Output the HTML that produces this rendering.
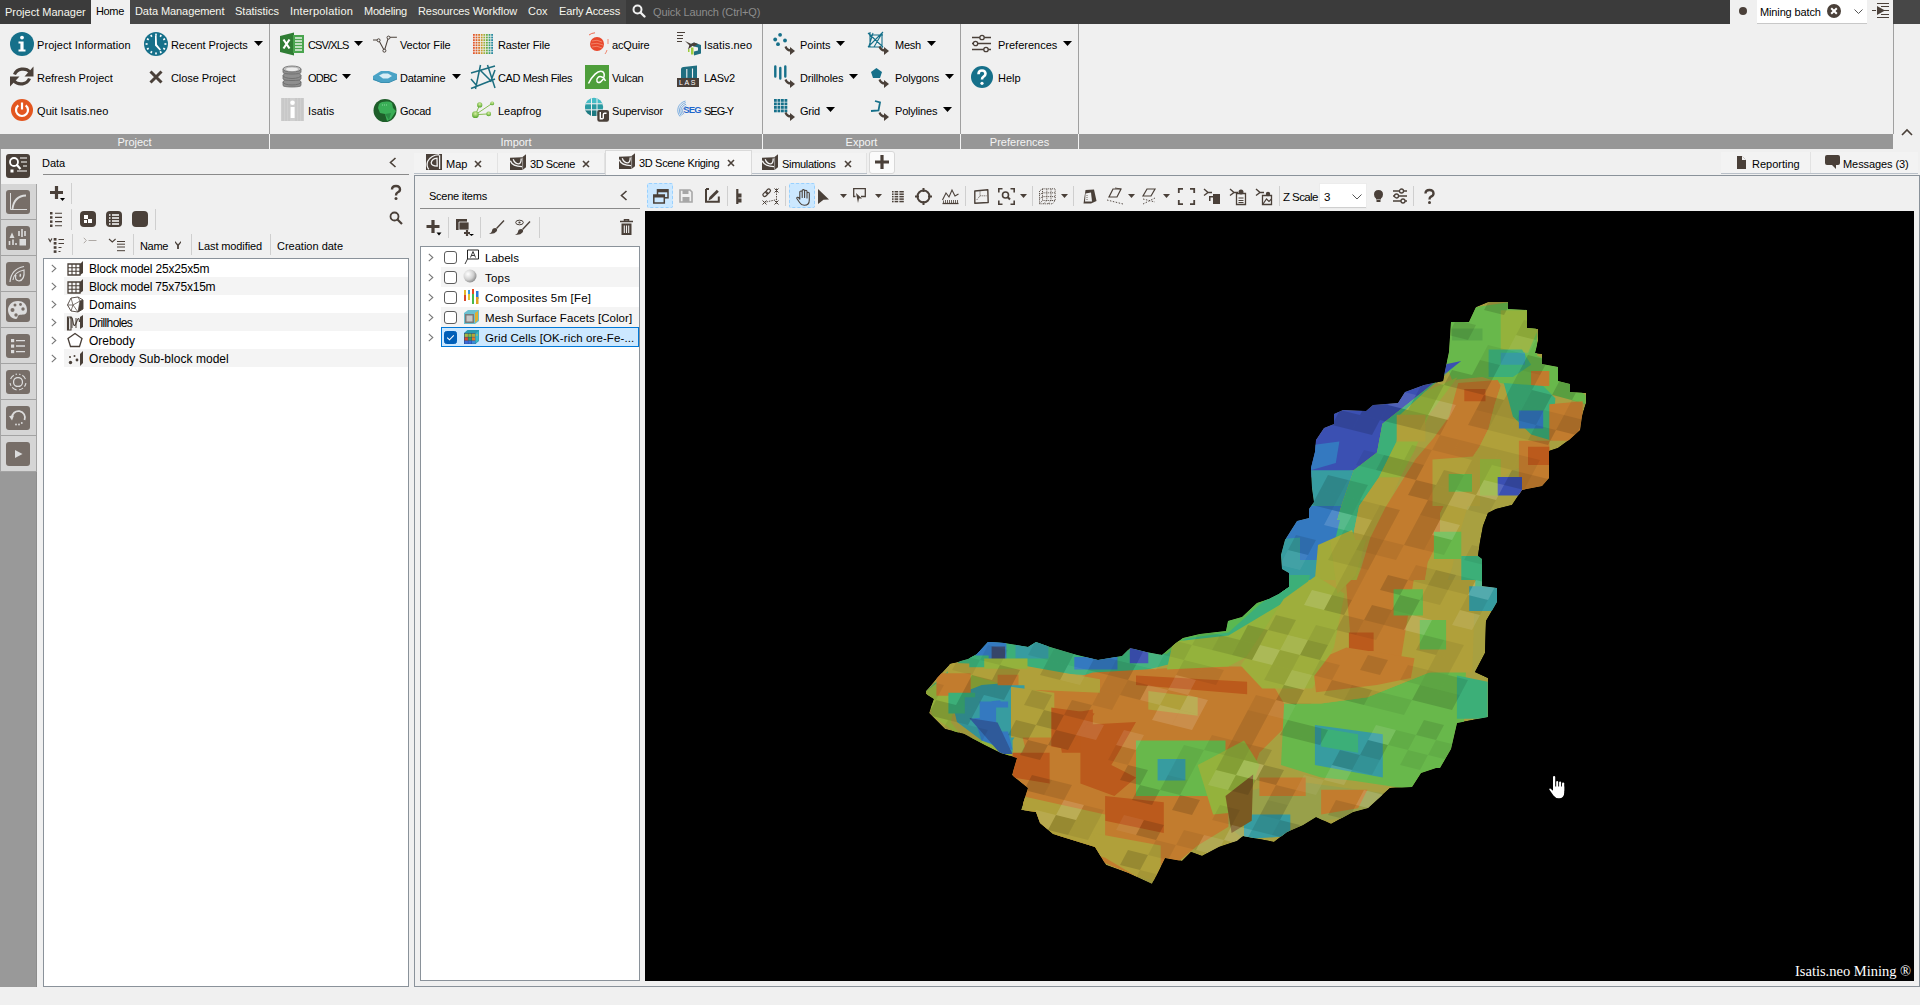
<!DOCTYPE html>
<html><head><meta charset="utf-8">
<style>
*{box-sizing:border-box;margin:0;padding:0}
html,body{width:1920px;height:1005px;overflow:hidden;background:#f0f0f0;font-family:"Liberation Sans",sans-serif;font-size:11px;color:#1b1b1b}
.a{position:absolute}
.t{position:absolute;white-space:nowrap;line-height:14px;font-size:11px}
svg{position:absolute;overflow:visible}
</style></head><body>
<div class="a" style="left:0px;top:0px;width:1920px;height:24px;background:#474747;"></div>
<div class="a" style="left:0px;top:0px;width:91px;height:24px;background:#3b3b3b;"></div>
<div class="a" style="left:91px;top:0px;width:39px;height:24px;background:#f0f0f0;"></div>
<div class="a" style="left:626px;top:0px;width:1104px;height:24px;background:#3b3b3b;"></div>
<div class="t" style="left:5px;top:5.0px;color:#f6f6ee;">Project Manager</div>
<div class="t" style="left:96px;top:4.0px;letter-spacing:-0.360px;color:#000;">Home</div>
<div class="t" style="left:135px;top:4.0px;letter-spacing:-0.073px;color:#f6f6ee;">Data Management</div>
<div class="t" style="left:235px;top:4.0px;color:#f6f6ee;">Statistics</div>
<div class="t" style="left:290px;top:4.0px;letter-spacing:0.189px;color:#f6f6ee;">Interpolation</div>
<div class="t" style="left:364px;top:4.0px;letter-spacing:-0.204px;color:#f6f6ee;">Modeling</div>
<div class="t" style="left:418px;top:4.0px;letter-spacing:-0.092px;color:#f6f6ee;">Resources Workflow</div>
<div class="t" style="left:528px;top:4.0px;color:#f6f6ee;">Cox</div>
<div class="t" style="left:559px;top:4.0px;letter-spacing:-0.164px;color:#f6f6ee;">Early Access</div>
<svg style="left:632px;top:4px" width="14" height="14" viewBox="0 0 14 14"><circle cx="5.5" cy="5.5" r="4" fill="none" stroke="#f0f0f0" stroke-width="2"/><path d="M8.5 8.5L12.5 12.5" stroke="#f0f0f0" stroke-width="2.4" stroke-linecap="round"/></svg>
<div class="t" style="left:653px;top:5.0px;letter-spacing:-0.118px;color:#8c8c8c;">Quick Launch (Ctrl+Q)</div>
<div class="a" style="left:1730px;top:0px;width:163px;height:24px;background:#f0f0f0;"></div>
<svg style="left:1739px;top:7px" width="8" height="8" viewBox="0 0 8 8"><circle cx="4" cy="4" r="4" fill="#4a4039"/></svg>
<div class="a" style="left:1757px;top:0px;width:110px;height:23px;background:#fff;box-shadow:0 1px 0 #c8c8c8"></div>
<div class="t" style="left:1760px;top:5.0px;letter-spacing:-0.135px;color:#000;">Mining batch</div>
<svg style="left:1827px;top:4px" width="14" height="14" viewBox="0 0 14 14"><circle cx="7" cy="7" r="7" fill="#4a4039"/><path d="M4.2 4.2L9.8 9.8M9.8 4.2L4.2 9.8" stroke="#fff" stroke-width="2"/></svg>
<svg style="left:1854px;top:9px" width="9" height="5" viewBox="0 0 9 5"><path d="M0.5 0.5L4.5 4.5L8.5 0.5" fill="none" stroke="#555" stroke-width="1"/></svg>
<svg style="left:1872px;top:2px" width="18" height="16" viewBox="0 0 18 16"><path d="M5 1.5H17M9 4.5H17M0 8.5H4M12 8.5H17M9 12.5H17M5 15.5H17" stroke="#4a4039" stroke-width="1"/><path d="M5 4L13 8.5L5 13Z" fill="#4a4039"/></svg>
<div class="a" style="left:0px;top:24px;width:1893px;height:110px;background:#f0f0f0;"></div>
<div class="a" style="left:1893px;top:24px;width:1px;height:110px;background:#a0a0a0;"></div>
<div class="a" style="left:269px;top:24px;width:1px;height:110px;background:#a0a0a0;"></div>
<div class="a" style="left:762px;top:24px;width:1px;height:110px;background:#a0a0a0;"></div>
<div class="a" style="left:960px;top:24px;width:1px;height:110px;background:#a0a0a0;"></div>
<div class="a" style="left:1078px;top:24px;width:1px;height:110px;background:#a0a0a0;"></div>
<div class="a" style="left:0px;top:134px;width:1893px;height:15px;background:#979797;"></div>
<div class="a" style="left:269px;top:134px;width:1px;height:15px;background:#f4f4f4;"></div>
<div class="a" style="left:762px;top:134px;width:1px;height:15px;background:#f4f4f4;"></div>
<div class="a" style="left:960px;top:134px;width:1px;height:15px;background:#f4f4f4;"></div>
<div class="a" style="left:1078px;top:134px;width:1px;height:15px;background:#f4f4f4;"></div>
<div class="t" style="left:0px;width:269px;text-align:center;top:134.5px;color:#f4f4f4">Project</div>
<div class="t" style="left:270px;width:492px;text-align:center;top:134.5px;color:#f4f4f4">Import</div>
<div class="t" style="left:763px;width:197px;text-align:center;top:134.5px;color:#f4f4f4">Export</div>
<div class="t" style="left:961px;width:117px;text-align:center;top:134.5px;color:#f4f4f4">Preferences</div>
<svg style="left:1901px;top:129px" width="12" height="7" viewBox="0 0 12 7"><path d="M1 6L6 1L11 6" fill="none" stroke="#4a4039" stroke-width="1.6"/></svg>
<div class="t" style="left:37px;top:38.0px;letter-spacing:0.068px;color:#000;">Project Information</div>
<div class="t" style="left:37px;top:71.0px;color:#000;">Refresh Project</div>
<div class="t" style="left:37px;top:104.0px;letter-spacing:0.073px;color:#000;">Quit Isatis.neo</div>
<div class="t" style="left:171px;top:38.0px;letter-spacing:-0.069px;color:#000;">Recent Projects</div>
<div class="t" style="left:171px;top:71.0px;letter-spacing:-0.078px;color:#000;">Close Project</div>
<div class="t" style="left:308px;top:38.0px;letter-spacing:-0.838px;color:#000;">CSV/XLS</div>
<div class="t" style="left:308px;top:71.0px;letter-spacing:-0.795px;color:#000;">ODBC</div>
<div class="t" style="left:308px;top:104.0px;letter-spacing:0.138px;color:#000;">Isatis</div>
<div class="t" style="left:400px;top:38.0px;letter-spacing:-0.133px;color:#000;">Vector File</div>
<div class="t" style="left:400px;top:71.0px;letter-spacing:-0.222px;color:#000;">Datamine</div>
<div class="t" style="left:400px;top:104.0px;letter-spacing:-0.342px;color:#000;">Gocad</div>
<div class="t" style="left:498px;top:38.0px;letter-spacing:-0.107px;color:#000;">Raster File</div>
<div class="t" style="left:498px;top:71.0px;letter-spacing:-0.390px;color:#000;">CAD Mesh Files</div>
<div class="t" style="left:498px;top:104.0px;color:#000;">Leapfrog</div>
<div class="t" style="left:612px;top:38.0px;letter-spacing:-0.159px;color:#000;">acQuire</div>
<div class="t" style="left:612px;top:71.0px;letter-spacing:-0.321px;color:#000;">Vulcan</div>
<div class="t" style="left:612px;top:104.0px;letter-spacing:-0.158px;color:#000;">Supervisor</div>
<div class="t" style="left:704px;top:38.0px;letter-spacing:0.122px;color:#000;">Isatis.neo</div>
<div class="t" style="left:704px;top:71.0px;letter-spacing:-0.342px;color:#000;">LASv2</div>
<div class="t" style="left:704px;top:104.0px;letter-spacing:-1.006px;color:#000;">SEG-Y</div>
<div class="t" style="left:800px;top:38.0px;color:#000;">Points</div>
<div class="t" style="left:800px;top:71.0px;letter-spacing:-0.203px;color:#000;">Drillholes</div>
<div class="t" style="left:800px;top:104.0px;letter-spacing:-0.245px;color:#000;">Grid</div>
<div class="t" style="left:895px;top:38.0px;letter-spacing:-0.224px;color:#000;">Mesh</div>
<div class="t" style="left:895px;top:71.0px;letter-spacing:-0.131px;color:#000;">Polygons</div>
<div class="t" style="left:895px;top:104.0px;letter-spacing:-0.202px;color:#000;">Polylines</div>
<div class="t" style="left:998px;top:38.0px;color:#000;">Preferences</div>
<div class="t" style="left:998px;top:71.0px;color:#000;">Help</div>
<svg style="left:254px;top:41px" width="9" height="5" viewBox="0 0 9 5"><path d="M0 0H9L4.5 5Z" fill="#000"/></svg>
<svg style="left:354px;top:41px" width="9" height="5" viewBox="0 0 9 5"><path d="M0 0H9L4.5 5Z" fill="#000"/></svg>
<svg style="left:342px;top:74px" width="9" height="5" viewBox="0 0 9 5"><path d="M0 0H9L4.5 5Z" fill="#000"/></svg>
<svg style="left:452px;top:74px" width="9" height="5" viewBox="0 0 9 5"><path d="M0 0H9L4.5 5Z" fill="#000"/></svg>
<svg style="left:836px;top:41px" width="9" height="5" viewBox="0 0 9 5"><path d="M0 0H9L4.5 5Z" fill="#000"/></svg>
<svg style="left:927px;top:41px" width="9" height="5" viewBox="0 0 9 5"><path d="M0 0H9L4.5 5Z" fill="#000"/></svg>
<svg style="left:849px;top:74px" width="9" height="5" viewBox="0 0 9 5"><path d="M0 0H9L4.5 5Z" fill="#000"/></svg>
<svg style="left:945px;top:74px" width="9" height="5" viewBox="0 0 9 5"><path d="M0 0H9L4.5 5Z" fill="#000"/></svg>
<svg style="left:826px;top:107px" width="9" height="5" viewBox="0 0 9 5"><path d="M0 0H9L4.5 5Z" fill="#000"/></svg>
<svg style="left:943px;top:107px" width="9" height="5" viewBox="0 0 9 5"><path d="M0 0H9L4.5 5Z" fill="#000"/></svg>
<svg style="left:1063px;top:41px" width="9" height="5" viewBox="0 0 9 5"><path d="M0 0H9L4.5 5Z" fill="#000"/></svg>
<svg style="left:10px;top:32px" width="24" height="24" viewBox="0 0 24 24"><circle cx="12" cy="12" r="12" fill="#16708a"/><circle cx="12" cy="5.6" r="1.9" fill="#fff"/><path d="M8.5 9.5H13.6V17.5H15.5V19.5H8.5V17.5H10.4V11.5H8.5Z" fill="#fff"/></svg>
<svg style="left:144px;top:32px" width="24" height="24" viewBox="0 0 24 24"><circle cx="12" cy="12" r="12" fill="#16708a"/><rect x="11.2" y="1.6" width="1.6" height="2" fill="#fff" transform="rotate(0 12 12)"/><rect x="11.2" y="1.6" width="1.6" height="2" fill="#fff" transform="rotate(30 12 12)"/><rect x="11.2" y="1.6" width="1.6" height="2" fill="#fff" transform="rotate(60 12 12)"/><rect x="11.2" y="1.6" width="1.6" height="2" fill="#fff" transform="rotate(90 12 12)"/><rect x="11.2" y="1.6" width="1.6" height="2" fill="#fff" transform="rotate(120 12 12)"/><rect x="11.2" y="1.6" width="1.6" height="2" fill="#fff" transform="rotate(150 12 12)"/><rect x="11.2" y="1.6" width="1.6" height="2" fill="#fff" transform="rotate(180 12 12)"/><rect x="11.2" y="1.6" width="1.6" height="2" fill="#fff" transform="rotate(210 12 12)"/><rect x="11.2" y="1.6" width="1.6" height="2" fill="#fff" transform="rotate(240 12 12)"/><rect x="11.2" y="1.6" width="1.6" height="2" fill="#fff" transform="rotate(270 12 12)"/><rect x="11.2" y="1.6" width="1.6" height="2" fill="#fff" transform="rotate(300 12 12)"/><rect x="11.2" y="1.6" width="1.6" height="2" fill="#fff" transform="rotate(330 12 12)"/><path d="M11 3.5L12.6 3.5L13 12.6L17 17.5L15.8 18.5L11 13.4Z" fill="#fff"/></svg>
<svg style="left:10px;top:65px" width="24" height="23" viewBox="0 0 24 23"><path d="M4.5 9.5A9 8 0 0 1 20 7" fill="none" stroke="#4a4039" stroke-width="3.2"/><path d="M23.5 1.5V11.5H14.5Z" fill="#4a4039"/><path d="M19.5 13.5A9 8 0 0 1 4 16" fill="none" stroke="#4a4039" stroke-width="3.2"/><path d="M0 21.5V11.5H9.5Z" fill="#4a4039"/></svg>
<svg style="left:149px;top:70px" width="14" height="14" viewBox="0 0 14 14"><path d="M1.5 1.5L12.5 12.5M12.5 1.5L1.5 12.5" stroke="#4a4039" stroke-width="3"/></svg>
<svg style="left:11px;top:99px" width="22" height="22" viewBox="0 0 22 22"><circle cx="11" cy="11" r="11" fill="#e3561f"/><path d="M7.3 6.3A6 6 0 1 0 14.7 6.3" fill="none" stroke="#fff" stroke-width="2.2"/><path d="M11 3.5V10.5" stroke="#fff" stroke-width="2.2"/></svg>
<svg style="left:280px;top:32px" width="24" height="24" viewBox="0 0 24 24"><path d="M0 4L14 0.5V23.5L0 20Z" fill="#2f7d34"/><rect x="13" y="3" width="11" height="18" fill="#4aa54f"/><path d="M15 6H22M15 9H22M15 12H22M15 15H22M15 18H22" stroke="#e6f2e6" stroke-width="1.3"/><path d="M3.5 7.5L9.5 16.5M9.5 7.5L3.5 16.5" stroke="#fff" stroke-width="2.2"/></svg>
<svg style="left:373px;top:36px" width="24" height="18" viewBox="0 0 24 18"><path d="M0 4H5.6L11.4 14.7L15.5 1.2H23.9" fill="none" stroke="#4a4039" stroke-width="1.1"/><circle cx="5.6" cy="4.3" r="1.5" fill="#f0f0f0" stroke="#4a4039" stroke-width="1"/><circle cx="11.4" cy="14.7" r="1.5" fill="#f0f0f0" stroke="#4a4039" stroke-width="1"/><circle cx="15.5" cy="1.6" r="1.5" fill="#f0f0f0" stroke="#4a4039" stroke-width="1"/></svg>
<svg style="left:473px;top:34px" width="21" height="21" viewBox="0 0 21 21"><rect x="0.0" y="0.0" width="1.8" height="1.8" fill="#e4572e"/><rect x="0.0" y="2.6" width="1.8" height="1.8" fill="#e4572e"/><rect x="0.0" y="5.2" width="1.8" height="1.8" fill="#e4572e"/><rect x="0.0" y="7.8" width="1.8" height="1.8" fill="#e4572e"/><rect x="0.0" y="10.4" width="1.8" height="1.8" fill="#e4572e"/><rect x="0.0" y="13.0" width="1.8" height="1.8" fill="#e4572e"/><rect x="0.0" y="15.6" width="1.8" height="1.8" fill="#e4572e"/><rect x="0.0" y="18.2" width="1.8" height="1.8" fill="#e4572e"/><rect x="2.6" y="0.0" width="1.8" height="1.8" fill="#e0602a"/><rect x="2.6" y="2.6" width="1.8" height="1.8" fill="#e0602a"/><rect x="2.6" y="5.2" width="1.8" height="1.8" fill="#e0602a"/><rect x="2.6" y="7.8" width="1.8" height="1.8" fill="#e0602a"/><rect x="2.6" y="10.4" width="1.8" height="1.8" fill="#e0602a"/><rect x="2.6" y="13.0" width="1.8" height="1.8" fill="#e0602a"/><rect x="2.6" y="15.6" width="1.8" height="1.8" fill="#e0602a"/><rect x="2.6" y="18.2" width="1.8" height="1.8" fill="#e0602a"/><rect x="5.2" y="0.0" width="1.8" height="1.8" fill="#d8782a"/><rect x="5.2" y="2.6" width="1.8" height="1.8" fill="#d8782a"/><rect x="5.2" y="5.2" width="1.8" height="1.8" fill="#d8782a"/><rect x="5.2" y="7.8" width="1.8" height="1.8" fill="#d8782a"/><rect x="5.2" y="10.4" width="1.8" height="1.8" fill="#d8782a"/><rect x="5.2" y="13.0" width="1.8" height="1.8" fill="#d8782a"/><rect x="5.2" y="15.6" width="1.8" height="1.8" fill="#d8782a"/><rect x="5.2" y="18.2" width="1.8" height="1.8" fill="#d8782a"/><rect x="7.8" y="0.0" width="1.8" height="1.8" fill="#c89a2e"/><rect x="7.8" y="2.6" width="1.8" height="1.8" fill="#c89a2e"/><rect x="7.8" y="5.2" width="1.8" height="1.8" fill="#c89a2e"/><rect x="7.8" y="7.8" width="1.8" height="1.8" fill="#c89a2e"/><rect x="7.8" y="10.4" width="1.8" height="1.8" fill="#c89a2e"/><rect x="7.8" y="13.0" width="1.8" height="1.8" fill="#c89a2e"/><rect x="7.8" y="15.6" width="1.8" height="1.8" fill="#c89a2e"/><rect x="7.8" y="18.2" width="1.8" height="1.8" fill="#c89a2e"/><rect x="10.4" y="0.0" width="1.8" height="1.8" fill="#9cb03c"/><rect x="10.4" y="2.6" width="1.8" height="1.8" fill="#9cb03c"/><rect x="10.4" y="5.2" width="1.8" height="1.8" fill="#9cb03c"/><rect x="10.4" y="7.8" width="1.8" height="1.8" fill="#9cb03c"/><rect x="10.4" y="10.4" width="1.8" height="1.8" fill="#9cb03c"/><rect x="10.4" y="13.0" width="1.8" height="1.8" fill="#9cb03c"/><rect x="10.4" y="15.6" width="1.8" height="1.8" fill="#9cb03c"/><rect x="10.4" y="18.2" width="1.8" height="1.8" fill="#9cb03c"/><rect x="13.0" y="0.0" width="1.8" height="1.8" fill="#6aae46"/><rect x="13.0" y="2.6" width="1.8" height="1.8" fill="#6aae46"/><rect x="13.0" y="5.2" width="1.8" height="1.8" fill="#6aae46"/><rect x="13.0" y="7.8" width="1.8" height="1.8" fill="#6aae46"/><rect x="13.0" y="10.4" width="1.8" height="1.8" fill="#6aae46"/><rect x="13.0" y="13.0" width="1.8" height="1.8" fill="#6aae46"/><rect x="13.0" y="15.6" width="1.8" height="1.8" fill="#6aae46"/><rect x="13.0" y="18.2" width="1.8" height="1.8" fill="#6aae46"/><rect x="15.6" y="0.0" width="1.8" height="1.8" fill="#3a9e78"/><rect x="15.6" y="2.6" width="1.8" height="1.8" fill="#3a9e78"/><rect x="15.6" y="5.2" width="1.8" height="1.8" fill="#3a9e78"/><rect x="15.6" y="7.8" width="1.8" height="1.8" fill="#3a9e78"/><rect x="15.6" y="10.4" width="1.8" height="1.8" fill="#3a9e78"/><rect x="15.6" y="13.0" width="1.8" height="1.8" fill="#3a9e78"/><rect x="15.6" y="15.6" width="1.8" height="1.8" fill="#3a9e78"/><rect x="15.6" y="18.2" width="1.8" height="1.8" fill="#3a9e78"/><rect x="18.2" y="0.0" width="1.8" height="1.8" fill="#2a8aa0"/><rect x="18.2" y="2.6" width="1.8" height="1.8" fill="#2a8aa0"/><rect x="18.2" y="5.2" width="1.8" height="1.8" fill="#2a8aa0"/><rect x="18.2" y="7.8" width="1.8" height="1.8" fill="#2a8aa0"/><rect x="18.2" y="10.4" width="1.8" height="1.8" fill="#2a8aa0"/><rect x="18.2" y="13.0" width="1.8" height="1.8" fill="#2a8aa0"/><rect x="18.2" y="15.6" width="1.8" height="1.8" fill="#2a8aa0"/><rect x="18.2" y="18.2" width="1.8" height="1.8" fill="#2a8aa0"/></svg>
<svg style="left:585px;top:32px" width="24" height="24" viewBox="0 0 24 24"><circle cx="12" cy="12" r="7" fill="#e8482c"/><path d="M7 9Q12 7 17 10M6 12Q12 10 18 13M7 15Q12 13 17 16" stroke="#f59a80" stroke-width="0.7" fill="none"/><path d="M4 3A11 11 0 0 1 10 0.8" stroke="#ef6a50" stroke-width="1" fill="none"/><path d="M23 7V12" stroke="#ef8870" stroke-width="1"/><path d="M22 18A11 11 0 0 1 20 22" stroke="#ef8870" stroke-width="1" fill="none"/></svg>
<svg style="left:677px;top:32px" width="24" height="24" viewBox="0 0 24 24"><path d="M0 0.5H8M0 3.5H6M0 6.5H6M0 9.5H5" stroke="#4a4039" stroke-width="1"/><path d="M8 9L16.5 13L11 17.5L12.3 13.2Z" fill="#4a4039"/><path d="M13 12.5L17 10.5L24 13V21.5L17 23.5V19.5L21 18.5V15.5L17 14.5Z" fill="#1f6e80"/><path d="M13 12.5L17 10.5L21 12L17 14.5Z" fill="#4a4039"/><rect x="14" y="15.5" width="2.5" height="7" fill="#9ccc3c"/><rect x="11" y="17" width="1.5" height="3" fill="#9ccc3c"/></svg>
<svg style="left:282px;top:65px" width="20" height="24" viewBox="0 0 20 24"><g fill="#8f8f8f" stroke="#6a6a6a" stroke-width="0.8"><path d="M1 17V20.5C1 22.5 19 22.5 19 20.5V17Z"/><ellipse cx="10" cy="17" rx="9" ry="3"/><path d="M1 10.5V14C1 16 19 16 19 14V10.5Z"/><ellipse cx="10" cy="10.5" rx="9" ry="3"/><path d="M1 4V7.5C1 9.5 19 9.5 19 7.5V4Z"/><ellipse cx="10" cy="4" rx="9" ry="3" fill="#bdbdbd"/></g><ellipse cx="10" cy="4.2" rx="6" ry="1.7" fill="#ececec"/></svg>
<svg style="left:373px;top:70px" width="24" height="13" viewBox="0 0 24 13"><path d="M0 6L8 1H16L24 4V9L16 12.5H8L0 10Z" fill="#4aa3c6"/><path d="M6 5.5L10 3.5H15L19 6L15 8.5H10Z" fill="#d8eef6"/><path d="M0 9L8 12.5H16L24 9" stroke="#3a8fb0" stroke-width="1" fill="none"/></svg>
<svg style="left:471px;top:65px" width="24" height="24" viewBox="0 0 24 24"><path d="M0 8L24 1M9.5 0L4.5 24M16.5 0L24 23M24 5L19.5 17M0 23.5L24 14M9 5L20 16M0 14L6 21" stroke="#1c6e80" stroke-width="1.5" fill="none"/></svg>
<svg style="left:585px;top:65px" width="24" height="24" viewBox="0 0 24 24"><rect width="24" height="24" fill="#4e9e3b"/><path d="M3.5 18.5C7 11 13 5 17 6.5C21 8 19 15 15.5 17C12 19 10.5 15 13 12.5C15 10.5 19 12 20.5 16" stroke="#fff" stroke-width="1.5" fill="none"/></svg>
<svg style="left:677px;top:65px" width="22" height="22" viewBox="0 0 22 22"><path d="M4 13V4.5Q4 2 6.5 2L20 0.5V13Z" fill="#1f6e80"/><path d="M9.8 4V12.7M15.5 3.5V12.7" stroke="#f0f0f0" stroke-width="1.1"/><rect x="0" y="13" width="22" height="9" fill="#4a4039"/><text x="11" y="20.3" font-size="7" font-family="Liberation Sans" fill="#fff" text-anchor="middle" letter-spacing="1.6">LAS</text></svg>
<svg style="left:281px;top:98px" width="23" height="23" viewBox="0 0 23 23"><rect width="23" height="23" fill="#cfcfcf"/><path d="M2 0V23M5 0V23M8 0V23M15 0V23M18 0V23M21 0V23" stroke="#c2c2c2" stroke-width="1"/><circle cx="11.5" cy="4.8" r="2.3" fill="#fff"/><rect x="9.6" y="9" width="4" height="11" fill="#fff"/></svg>
<svg style="left:373px;top:99px" width="24" height="23" viewBox="0 0 24 23"><circle cx="12" cy="11.5" r="11.5" fill="#1e5e2a"/><path d="M6 5C9 2 16 2 19 4L20 9L23 12L18 20L14 22L12 15L7 14L5 9Z" fill="#3aae57"/><path d="M12 15L18 14L16 21Z" fill="#2a8a44"/><path d="M9 6H15" stroke="#9fe0b0" stroke-width="0.8" stroke-dasharray="1 1"/></svg>
<svg style="left:471px;top:101px" width="24" height="18" viewBox="0 0 24 18"><defs><radialGradient id="lfg" cx="0.5" cy="0.35" r="0.6"><stop offset="0" stop-color="#d8f0a0"/><stop offset="1" stop-color="#5aa830"/></radialGradient></defs><path d="M4.4 13.7L8.7 3.9M4.4 13.7L21.2 2.4M4.4 13.7L17.7 12.9" stroke="#7ab83e" stroke-width="0.9" fill="none"/><circle cx="8.7" cy="3.9" r="2.6" fill="url(#lfg)"/><circle cx="4.4" cy="13.7" r="3.4" fill="url(#lfg)"/><circle cx="21.2" cy="2.4" r="1.9" fill="url(#lfg)"/><circle cx="17.7" cy="12.9" r="2.4" fill="url(#lfg)"/></svg>
<svg style="left:585px;top:97px" width="24" height="25" viewBox="0 0 24 25"><defs><clipPath id="glb"><circle cx="9" cy="9.9" r="9.2"/></clipPath></defs><g clip-path="url(#glb)"><rect x="0" y="0" width="19" height="6.6" fill="#45bcc6"/><rect x="0" y="6.6" width="19" height="6.2" fill="#2a9aa2"/><rect x="0" y="12.8" width="19" height="7" fill="#1d7a82"/><path d="M0 6.8H19M0 12.9H19M6.5 0V20M12 0V20" stroke="#f0f0f0" stroke-width="1"/></g><rect x="12.3" y="12.9" width="11.7" height="11.8" rx="2.2" fill="#4a4039"/><path d="M15.3 15V21.8H17.8M21.5 16.3H19.6Q18.3 16.3 18.3 17.6V21.8" stroke="#fff" stroke-width="1.4" fill="none"/></svg>
<svg style="left:677px;top:100px" width="24" height="18" viewBox="0 0 24 18"><g fill="none" stroke="#4a90d8" stroke-width="0.7"><path d="M3 16.5C-1.5 11 1 3 8.5 1"/><path d="M4.2 15.8C0.8 11 2.5 4.5 8.8 2.6"/><path d="M5.5 15C2.5 11 4 6 9 4.3"/><path d="M6.8 14.2C4.5 11 5.5 7.5 9.5 6"/></g><text x="15" y="12.6" font-size="9.5" font-family="Liberation Sans" font-weight="bold" fill="#1e66cc" text-anchor="middle" letter-spacing="-0.9">SEG</text></svg>
<svg style="left:773px;top:32px" width="24" height="24" viewBox="0 0 24 24"><g fill="#16708a"><circle cx="7.1" cy="2.8" r="1.9"/><circle cx="2.2" cy="7.5" r="1.9"/><circle cx="12" cy="8.5" r="1.9"/><circle cx="5" cy="12.2" r="1.9"/></g><path d="M12.5 14.5Q14 18.5 18 18.5" stroke="#4a4039" stroke-width="2.2" fill="none"/><path d="M17 15L22 19L17 23Z" fill="#4a4039"/></svg>
<svg style="left:867px;top:32px" width="24" height="24" viewBox="0 0 24 24"><path d="M1 1L16 15M16 0L1 15M2 3H16M3 0V15M15 1V16M1 15H14M6 1L2 14M14 3L7 15" stroke="#16708a" stroke-width="1.1" fill="none"/><path d="M12.5 14.5Q14 18.5 18 18.5" stroke="#4a4039" stroke-width="2.2" fill="none"/><path d="M17 15L22 19L17 23Z" fill="#4a4039"/></svg>
<svg style="left:773px;top:65px" width="24" height="24" viewBox="0 0 24 24"><g stroke="#16708a" stroke-width="2.4" stroke-linecap="round"><path d="M2.3 1.5V11.5M7.3 3V13.5M12.3 1.5V11.5"/></g><path d="M12.5 14.5Q14 18.5 18 18.5" stroke="#4a4039" stroke-width="2.2" fill="none"/><path d="M17 15L22 19L17 23Z" fill="#4a4039"/></svg>
<svg style="left:867px;top:65px" width="24" height="24" viewBox="0 0 24 24"><path d="M9.4 3L15 7L13 13H6L4 7Z" fill="#16708a"/><path d="M12.5 14.5Q14 18.5 18 18.5" stroke="#4a4039" stroke-width="2.2" fill="none"/><path d="M17 15L22 19L17 23Z" fill="#4a4039"/></svg>
<svg style="left:773px;top:98px" width="24" height="24" viewBox="0 0 24 24"><rect x="1.0" y="1.0" width="2.8" height="2.8" fill="#16708a"/><rect x="1.0" y="4.5" width="2.8" height="2.8" fill="#16708a"/><rect x="1.0" y="8.0" width="2.8" height="2.8" fill="#16708a"/><rect x="1.0" y="11.5" width="2.8" height="2.8" fill="#16708a"/><rect x="4.5" y="1.0" width="2.8" height="2.8" fill="#16708a"/><rect x="4.5" y="4.5" width="2.8" height="2.8" fill="#16708a"/><rect x="4.5" y="8.0" width="2.8" height="2.8" fill="#16708a"/><rect x="4.5" y="11.5" width="2.8" height="2.8" fill="#16708a"/><rect x="8.0" y="1.0" width="2.8" height="2.8" fill="#16708a"/><rect x="8.0" y="4.5" width="2.8" height="2.8" fill="#16708a"/><rect x="8.0" y="8.0" width="2.8" height="2.8" fill="#16708a"/><rect x="8.0" y="11.5" width="2.8" height="2.8" fill="#16708a"/><rect x="11.5" y="1.0" width="2.8" height="2.8" fill="#16708a"/><rect x="11.5" y="4.5" width="2.8" height="2.8" fill="#16708a"/><rect x="11.5" y="8.0" width="2.8" height="2.8" fill="#16708a"/><rect x="11.5" y="11.5" width="2.8" height="2.8" fill="#16708a"/><path d="M12.5 14.5Q14 18.5 18 18.5" stroke="#4a4039" stroke-width="2.2" fill="none"/><path d="M17 15L22 19L17 23Z" fill="#4a4039"/></svg>
<svg style="left:867px;top:98px" width="24" height="24" viewBox="0 0 24 24"><path d="M8 3L13 4.5L11.5 12.5L4 13" stroke="#16708a" stroke-width="1.8" fill="none"/><path d="M12.5 14.5Q14 18.5 18 18.5" stroke="#4a4039" stroke-width="2.2" fill="none"/><path d="M17 15L22 19L17 23Z" fill="#4a4039"/></svg>
<svg style="left:972px;top:34px" width="19" height="19" viewBox="0 0 19 19"><g stroke="#4a4039" stroke-width="1.3" fill="#f0f0f0"><path d="M0 3.5H19M0 9.5H19M0 15.5H19"/><circle cx="10" cy="3.5" r="2.2"/><circle cx="3.5" cy="9.5" r="2.2"/><circle cx="14" cy="15.5" r="2.2"/></g></svg>
<svg style="left:971px;top:66px" width="22" height="22" viewBox="0 0 22 22"><circle cx="11" cy="11" r="11" fill="#16708a"/><path d="M7.5 8.2Q7.5 4.5 11 4.5Q14.5 4.5 14.5 7.8Q14.5 9.6 12.3 10.8Q11 11.5 11 13.6" stroke="#fff" stroke-width="2.6" fill="none"/><circle cx="11" cy="17.3" r="1.6" fill="#fff"/></svg>
<div class="a" style="left:0px;top:149px;width:37px;height:838px;background:#999999;border-right:1px solid #8c8c8c"></div>
<div class="a" style="left:0px;top:149px;width:37px;height:35px;background:#f0f0f0;border-left:1px solid #a0a0a0"></div>
<div class="a" style="left:0px;top:184px;width:37px;height:36px;background:#d5d5d5;border:1px solid #a3a3a3;border-top:none"></div>
<div class="a" style="left:0px;top:220px;width:37px;height:36px;background:#d5d5d5;border:1px solid #a3a3a3;border-top:none"></div>
<div class="a" style="left:0px;top:256px;width:37px;height:36px;background:#d5d5d5;border:1px solid #a3a3a3;border-top:none"></div>
<div class="a" style="left:0px;top:292px;width:37px;height:36px;background:#d5d5d5;border:1px solid #a3a3a3;border-top:none"></div>
<div class="a" style="left:0px;top:328px;width:37px;height:36px;background:#d5d5d5;border:1px solid #a3a3a3;border-top:none"></div>
<div class="a" style="left:0px;top:364px;width:37px;height:36px;background:#d5d5d5;border:1px solid #a3a3a3;border-top:none"></div>
<div class="a" style="left:0px;top:400px;width:37px;height:36px;background:#d5d5d5;border:1px solid #a3a3a3;border-top:none"></div>
<div class="a" style="left:0px;top:436px;width:37px;height:36px;background:#d5d5d5;border:1px solid #a3a3a3;border-top:none"></div>
<svg style="left:6px;top:154px" width="24" height="24" viewBox="0 0 24 24"><rect width="24" height="24" rx="3" fill="#4a4039"/><circle cx="8" cy="8" r="4" fill="none" stroke="#fff" stroke-width="1.8"/><path d="M10.5 10.5L14.5 15" stroke="#fff" stroke-width="2.2"/><path d="M14 4H21M15 8H21M17 12H21M11 17H21" stroke="#fff" stroke-width="1.1"/><rect x="4.5" y="15.5" width="3" height="3" fill="#fff"/></svg>
<svg style="left:6px;top:190px" width="24" height="24" viewBox="0 0 24 24"><rect width="24" height="24" rx="3" fill="#776e68"/><path d="M4.5 3V19.5H21" stroke="#dcdcdc" stroke-width="1" fill="none"/><path d="M6.5 19Q8 6 20 5.5" stroke="#dcdcdc" stroke-width="1.8" fill="none"/></svg>
<svg style="left:6px;top:226px" width="24" height="24" viewBox="0 0 24 24"><rect width="24" height="24" rx="3" fill="#776e68"/><path d="M3.5 12L6 6.5L8.5 12Z" fill="#dcdcdc"/><path d="M13 5V10M16 3V11M19 5V10M3.5 19V15M7 19V13.5M10 19V17" stroke="#dcdcdc" stroke-width="1.6"/><rect x="13.5" y="13" width="6.5" height="6.5" fill="#dcdcdc"/></svg>
<svg style="left:6px;top:262px" width="24" height="24" viewBox="0 0 24 24"><rect width="24" height="24" rx="3" fill="#776e68"/><path d="M4 20Q5 7 18 4.5" stroke="#dcdcdc" stroke-width="1.2" fill="none"/><path d="M7 18Q8 10 18 8Q19 18 13 19Q8 18 10 13" stroke="#dcdcdc" stroke-width="1.2" fill="none"/><path d="M14 11.5Q16 12 14.5 15Q12.5 15 14 11.5Z" fill="#dcdcdc"/></svg>
<svg style="left:6px;top:298px" width="24" height="24" viewBox="0 0 24 24"><rect width="24" height="24" rx="3" fill="#776e68"/><path d="M12 3C5 3 2 8 2 12C2 17 6 21 10 21C12 21 11 18 13 17C16 16 21 18 21 12C21 6 17 3 12 3Z" fill="#dcdcdc"/><circle cx="6.5" cy="12" r="2" fill="#776e68"/><circle cx="10" cy="17" r="1.7" fill="#776e68"/><circle cx="9" cy="7" r="1.5" fill="#776e68"/><circle cx="14.5" cy="6.5" r="1.4" fill="#776e68"/><circle cx="17" cy="11" r="1.7" fill="#776e68"/></svg>
<svg style="left:6px;top:334px" width="24" height="24" viewBox="0 0 24 24"><rect width="24" height="24" rx="3" fill="#776e68"/><rect x="5" y="5" width="3.2" height="3.2" fill="#dcdcdc"/><rect x="5" y="10.5" width="3.2" height="3.2" fill="#dcdcdc"/><rect x="5" y="16" width="3.2" height="3.2" fill="#dcdcdc"/><path d="M10 6.6H19M10 12H19M10 17.6H19" stroke="#dcdcdc" stroke-width="1.4"/></svg>
<svg style="left:6px;top:370px" width="24" height="24" viewBox="0 0 24 24"><rect width="24" height="24" rx="3" fill="#776e68"/><circle cx="12" cy="12" r="8" fill="none" stroke="#dcdcdc" stroke-width="1.1" stroke-dasharray="5 2"/><circle cx="12" cy="12" r="4.5" fill="none" stroke="#dcdcdc" stroke-width="1.3"/><path d="M12 2V7M12 17V22M2 12H7M17 12H22" stroke="#776e68" stroke-width="2"/></svg>
<svg style="left:6px;top:406px" width="24" height="24" viewBox="0 0 24 24"><rect width="24" height="24" rx="3" fill="#776e68"/><path d="M6 12A6.5 6.5 0 1 1 18.5 14" stroke="#dcdcdc" stroke-width="1.8" fill="none"/><path d="M3 10L8 9.5L6 14.5Z" fill="#dcdcdc"/><circle cx="10" cy="18.5" r="0.9" fill="#dcdcdc"/><circle cx="13" cy="18.5" r="0.9" fill="#dcdcdc"/><circle cx="15.8" cy="17" r="0.9" fill="#dcdcdc"/></svg>
<svg style="left:6px;top:442px" width="24" height="24" viewBox="0 0 24 24"><rect width="24" height="24" rx="3" fill="#776e68"/><path d="M9 8L16.5 12L9 16Z" fill="#dcdcdc"/></svg>
<div class="t" style="left:42px;top:156.0px;color:#000;">Data</div>
<svg style="left:389px;top:157px" width="8" height="11" viewBox="0 0 8 11"><path d="M6.5 1L1.5 5.5L6.5 10" stroke="#4a4039" stroke-width="1.6" fill="none"/></svg>
<div class="a" style="left:43px;top:174px;width:366px;height:1px;background:#8a8a8a;"></div>
<svg style="left:49px;top:186px" width="16" height="15" viewBox="0 0 16 15"><path d="M7.5 0V13M1 6.5H14" stroke="#4a4039" stroke-width="3.2"/><path d="M11 12H16L13.5 15Z" fill="#000"/></svg>
<div class="a" style="left:71px;top:183px;width:1px;height:21px;background:#cfcfcf;"></div>
<svg style="left:390px;top:185px" width="12" height="15" viewBox="0 0 12 15"><path d="M2 4.5Q2 1 6 1Q10 1 10 4.5Q10 6.5 7.5 7.5Q6 8.2 6 10.5" stroke="#4a4039" stroke-width="2.4" fill="none"/><circle cx="6" cy="13.5" r="1.5" fill="#4a4039"/></svg>
<svg style="left:50px;top:212px" width="13" height="15" viewBox="0 0 13 15"><g fill="#4a4039"><rect x="0" y="0" width="2.5" height="2.5"/><rect x="0" y="4.2" width="2.5" height="2.5"/><rect x="0" y="8.4" width="2.5" height="2.5"/><rect x="0" y="12.5" width="2.5" height="2.5"/></g><path d="M5 1.2H12M5 5.4H12M5 9.6H12M5 13.7H12" stroke="#4a4039" stroke-width="1.1"/></svg>
<div class="a" style="left:71px;top:209px;width:1px;height:21px;background:#cfcfcf;"></div>
<svg style="left:80px;top:211px" width="16" height="16" viewBox="0 0 16 16"><rect width="16" height="16" rx="4" fill="#4a4039"/><path d="M4 4H8V8H4ZM8 8H12V12H8Z" fill="#fff"/><path d="M4 9H7V12H4Z" fill="#fff"/></svg>
<svg style="left:106px;top:211px" width="16" height="16" viewBox="0 0 16 16"><rect width="16" height="16" rx="4" fill="#4a4039"/><path d="M3 4H4.5M6 4H13M3 7H4.5M6 7H13M3 10H4.5M6 10H13M3 13H4.5M6 13H13" stroke="#fff" stroke-width="1.3"/></svg>
<svg style="left:132px;top:211px" width="16" height="16" viewBox="0 0 16 16"><rect width="16" height="16" rx="4" fill="#4a4039"/></svg>
<div class="a" style="left:155px;top:209px;width:1px;height:21px;background:#cfcfcf;"></div>
<svg style="left:389px;top:211px" width="14" height="14" viewBox="0 0 14 14"><circle cx="5.5" cy="5.5" r="4" fill="none" stroke="#4a4039" stroke-width="1.8"/><path d="M8.5 8.5L13 13" stroke="#4a4039" stroke-width="2.2"/></svg>
<svg style="left:48px;top:237px" width="17" height="17" viewBox="0 0 17 17"><path d="M0.5 1.5L2.2 4.5L3.9 1.5" stroke="#4a4039" stroke-width="1.2" fill="none"/><g fill="#4a4039"><rect x="5.7" y="1" width="2.8" height="2.6"/><rect x="5.7" y="5" width="2.8" height="2.6"/><rect x="5.7" y="9.2" width="2.8" height="2.6"/><rect x="5.7" y="13.3" width="2.8" height="2.6"/></g><path d="M10.5 2.5H16M10.5 6.5H16M10.5 10.5H13.5M10.5 14.5H12.5" stroke="#4a4039" stroke-width="1"/></svg>
<div class="a" style="left:72px;top:234px;width:1px;height:21px;background:#cfcfcf;"></div>
<svg style="left:83px;top:237px" width="16" height="8" viewBox="0 0 16 8"><path d="M0.8 0.8L3.3 3.5L0.8 6.2M5.5 3.5H13.5" stroke="#a6a09c" stroke-width="0.9" fill="none"/></svg>
<svg style="left:108px;top:238px" width="18" height="15" viewBox="0 0 18 15"><path d="M1 1L4.3 4L7.6 1" stroke="#4a4039" stroke-width="1.1" fill="none"/><path d="M9 3.5H17M9 6.2H17M9 9H17M9 12.7H17" stroke="#4a4039" stroke-width="1"/></svg>
<div class="a" style="left:133px;top:234px;width:1px;height:21px;background:#cfcfcf;"></div>
<div class="t" style="left:140px;top:239.0px;letter-spacing:-0.335px;color:#000;">Name</div>
<svg style="left:175px;top:241px" width="6" height="8" viewBox="0 0 6 8"><path d="M0 0L3 3.3L6 0V1.8L3.9 4.6V8H2.1V4.6L0 1.8Z" fill="#4a4039"/></svg>
<div class="a" style="left:191px;top:234px;width:1px;height:21px;background:#cfcfcf;"></div>
<div class="t" style="left:198px;top:239.0px;letter-spacing:-0.109px;color:#000;">Last modified</div>
<div class="a" style="left:270px;top:234px;width:1px;height:21px;background:#cfcfcf;"></div>
<div class="t" style="left:277px;top:239.0px;color:#000;">Creation date</div>
<div class="a" style="left:43px;top:258px;width:366px;height:729px;background:#fff;border:1px solid #8a929a"></div>
<svg style="left:51px;top:264px" width="6" height="9" viewBox="0 0 6 9"><path d="M0.8 0.8L4.8 4.5L0.8 8.2" stroke="#777" stroke-width="1.1" fill="none"/></svg>
<svg style="left:67px;top:260px" width="16" height="16" viewBox="0 0 16 16"><path d="M1 4H13V15H1Z" fill="none" stroke="#4a4039" stroke-width="1.3"/><path d="M1 7.7H13M1 11.3H13M5 4V15M9 4V15" stroke="#4a4039" stroke-width="1.1"/><path d="M13 4L16 1V13L13 15Z" fill="#4a4039"/></svg>
<div class="t" style="left:89px;top:261.5px;letter-spacing:-0.183px;color:#000;font-size:12px;">Block model 25x25x5m</div>
<div class="a" style="left:64px;top:277px;width:344px;height:18px;background:#f4f4f4;"></div>
<svg style="left:51px;top:282px" width="6" height="9" viewBox="0 0 6 9"><path d="M0.8 0.8L4.8 4.5L0.8 8.2" stroke="#777" stroke-width="1.1" fill="none"/></svg>
<svg style="left:67px;top:278px" width="16" height="16" viewBox="0 0 16 16"><path d="M1 4H13V15H1Z" fill="none" stroke="#4a4039" stroke-width="1.3"/><path d="M1 7.7H13M1 11.3H13M5 4V15M9 4V15" stroke="#4a4039" stroke-width="1.1"/><path d="M13 4L16 1V13L13 15Z" fill="#4a4039"/></svg>
<div class="t" style="left:89px;top:279.5px;letter-spacing:-0.206px;color:#000;font-size:12px;">Block model 75x75x15m</div>
<svg style="left:51px;top:300px" width="6" height="9" viewBox="0 0 6 9"><path d="M0.8 0.8L4.8 4.5L0.8 8.2" stroke="#777" stroke-width="1.1" fill="none"/></svg>
<svg style="left:67px;top:296px" width="16" height="16" viewBox="0 0 16 16"><path d="M4 2L11 1L16 4V13L11 16L4 15L0.5 9Z" fill="none" stroke="#4a4039" stroke-width="0.9"/><path d="M4 2L6 9L0.5 9M6 9L11 16M6 9L13 5L11 1M13 5L11 16M4 15L6 9M13 5L16 4" stroke="#4a4039" stroke-width="0.7" fill="none"/><path d="M13 5L16 4V13L11 16Z" fill="#4a4039"/></svg>
<div class="t" style="left:89px;top:297.5px;color:#000;font-size:12px;">Domains</div>
<div class="a" style="left:64px;top:313px;width:344px;height:18px;background:#f4f4f4;"></div>
<svg style="left:51px;top:318px" width="6" height="9" viewBox="0 0 6 9"><path d="M0.8 0.8L4.8 4.5L0.8 8.2" stroke="#777" stroke-width="1.1" fill="none"/></svg>
<svg style="left:67px;top:314px" width="16" height="16" viewBox="0 0 16 16"><path d="M1.5 3.5V16M3 4.5Q5 1 6 8Q7 15 9.5 8Q12 1 12.5 8" stroke="#4a4039" stroke-width="1.2" fill="none"/><path d="M0.5 3H4V16H0.5Z" fill="none" stroke="#4a4039" stroke-width="1.1"/><path d="M13 3L16 1V13L13 15Z" fill="#4a4039"/><path d="M5 4V14M9 4V14" stroke="#4a4039" stroke-width="1"/></svg>
<div class="t" style="left:89px;top:315.5px;letter-spacing:-0.615px;color:#000;font-size:12px;">Drillholes</div>
<svg style="left:51px;top:336px" width="6" height="9" viewBox="0 0 6 9"><path d="M0.8 0.8L4.8 4.5L0.8 8.2" stroke="#777" stroke-width="1.1" fill="none"/></svg>
<svg style="left:67px;top:332px" width="16" height="16" viewBox="0 0 16 16"><path d="M8 1.5L15 6.5L12.5 14.5H3.5L1 6.5Z" fill="none" stroke="#4a4039" stroke-width="1.3"/></svg>
<div class="t" style="left:89px;top:333.5px;color:#000;font-size:12px;">Orebody</div>
<div class="a" style="left:64px;top:349px;width:344px;height:18px;background:#f4f4f4;"></div>
<svg style="left:51px;top:354px" width="6" height="9" viewBox="0 0 6 9"><path d="M0.8 0.8L4.8 4.5L0.8 8.2" stroke="#777" stroke-width="1.1" fill="none"/></svg>
<svg style="left:67px;top:350px" width="16" height="16" viewBox="0 0 16 16"><circle cx="3" cy="7" r="1" fill="#4a4039"/><circle cx="7.5" cy="6" r="1" fill="#4a4039"/><circle cx="3.5" cy="12.5" r="1.7" fill="#4a4039"/><circle cx="10" cy="10" r="1.4" fill="#4a4039"/><path d="M13 4L16 1V13L13 16Z" fill="#4a4039"/></svg>
<div class="t" style="left:89px;top:351.5px;letter-spacing:0.046px;color:#000;font-size:12px;">Orebody Sub-block model</div>
<div class="a" style="left:414px;top:153px;width:84px;height:20px;background:#f3f3f3;border-right:1px solid #e2e2e2"></div>
<div class="a" style="left:414px;top:173px;width:84px;height:1px;background:#b9c0c8;"></div>
<div class="t" style="left:446px;top:157.0px;color:#000;">Map</div>
<svg style="left:474px;top:160px" width="8" height="8" viewBox="0 0 8 8"><path d="M1 1L7 7M7 1L1 7" stroke="#4a4039" stroke-width="1.6"/></svg>
<svg style="left:426px;top:154px" width="16" height="16" viewBox="0 0 16 16"><rect width="16" height="16" fill="#4a4039"/><path d="M13.2 0.6Q4.5 1.2 1.6 7.5Q0.2 12 2.8 15.4M13.6 1.2V15" stroke="#f2f2f2" stroke-width="1.3" fill="none"/><path d="M11 4.2Q6 4.6 5.2 8.8Q5.5 12 11.2 12.2Z" fill="none" stroke="#f2f2f2" stroke-width="1.3"/></svg>
<div class="a" style="left:498px;top:153px;width:107px;height:20px;background:#f3f3f3;border-right:1px solid #e2e2e2"></div>
<div class="a" style="left:498px;top:173px;width:107px;height:1px;background:#b9c0c8;"></div>
<div class="t" style="left:530px;top:157.0px;letter-spacing:-0.426px;color:#000;">3D Scene</div>
<svg style="left:582px;top:160px" width="8" height="8" viewBox="0 0 8 8"><path d="M1 1L7 7M7 1L1 7" stroke="#4a4039" stroke-width="1.6"/></svg>
<svg style="left:510px;top:154px" width="16" height="16" viewBox="0 0 16 16"><path d="M0 3.8L12.2 3.3L16 0.3V13.2L12.5 16H0Z" fill="#4a4039"/><path d="M0.3 6.8Q2.5 12.6 12 12.6" stroke="#f2f2f2" stroke-width="1.4" fill="none"/><path d="M3.2 5.2Q4.8 9.8 8.8 9.8Q11.2 9.6 11.2 4.6" stroke="#f2f2f2" stroke-width="1.3" fill="none"/><path d="M12.6 3.6V15.8" stroke="#f2f2f2" stroke-width="0.5"/></svg>
<div class="a" style="left:752px;top:153px;width:115px;height:20px;background:#f3f3f3;border-right:1px solid #e2e2e2"></div>
<div class="a" style="left:752px;top:173px;width:115px;height:1px;background:#b9c0c8;"></div>
<div class="t" style="left:782px;top:157.0px;letter-spacing:-0.323px;color:#000;">Simulations</div>
<svg style="left:844px;top:160px" width="8" height="8" viewBox="0 0 8 8"><path d="M1 1L7 7M7 1L1 7" stroke="#4a4039" stroke-width="1.6"/></svg>
<svg style="left:762px;top:154px" width="16" height="16" viewBox="0 0 16 16"><path d="M0 3.8L12.2 3.3L16 0.3V13.2L12.5 16H0Z" fill="#4a4039"/><path d="M0.3 6.8Q2.5 12.6 12 12.6" stroke="#f2f2f2" stroke-width="1.4" fill="none"/><path d="M3.2 5.2Q4.8 9.8 8.8 9.8Q11.2 9.6 11.2 4.6" stroke="#f2f2f2" stroke-width="1.3" fill="none"/><path d="M12.6 3.6V15.8" stroke="#f2f2f2" stroke-width="0.5"/></svg>
<div class="a" style="left:605px;top:150px;width:147px;height:26px;background:#f7f7f7;border:1px solid #dadada;border-bottom:none"></div>
<div class="t" style="left:639px;top:156.0px;letter-spacing:-0.331px;color:#000;">3D Scene Kriging</div>
<svg style="left:727px;top:159px" width="8" height="8" viewBox="0 0 8 8"><path d="M1 1L7 7M7 1L1 7" stroke="#4a4039" stroke-width="1.6"/></svg>
<svg style="left:619px;top:153px" width="16" height="16" viewBox="0 0 16 16"><path d="M0 3.8L12.2 3.3L16 0.3V13.2L12.5 16H0Z" fill="#4a4039"/><path d="M0.3 6.8Q2.5 12.6 12 12.6" stroke="#f2f2f2" stroke-width="1.4" fill="none"/><path d="M3.2 5.2Q4.8 9.8 8.8 9.8Q11.2 9.6 11.2 4.6" stroke="#f2f2f2" stroke-width="1.3" fill="none"/><path d="M12.6 3.6V15.8" stroke="#f2f2f2" stroke-width="0.5"/></svg>
<div class="a" style="left:869px;top:151px;width:26px;height:23px;background:#fbfbfb;border:1px solid #d8d8d8;border-radius:3px"></div>
<svg style="left:875px;top:155px" width="14" height="14" viewBox="0 0 14 14"><path d="M7 0V14M0 7H14" stroke="#4a4039" stroke-width="3.2"/></svg>
<div class="a" style="left:1721px;top:152px;width:90px;height:21px;background:#f3f3f3;border-right:1px solid #e2e2e2"></div>
<div class="a" style="left:1811px;top:152px;width:107px;height:21px;background:#f3f3f3;"></div>
<div class="a" style="left:1721px;top:173px;width:197px;height:1px;background:#b9c0c8;"></div>
<svg style="left:1737px;top:156px" width="9" height="13" viewBox="0 0 9 13"><path d="M0 0H5L9 4V13H0Z" fill="#4a4039"/><path d="M5 0V4H9" fill="#f3f3f3"/><path d="M5.5 0.5V3.5H8.5" stroke="#f3f3f3" stroke-width="1" fill="none"/></svg>
<div class="t" style="left:1752px;top:157.0px;color:#000;">Reporting</div>
<svg style="left:1825px;top:155px" width="15" height="14" viewBox="0 0 15 14"><path d="M2 0H13Q15 0 15 2V8Q15 10 13 10H11V14L7 10H2Q0 10 0 8V2Q0 0 2 0Z" fill="#4a4039"/></svg>
<div class="t" style="left:1843px;top:157.0px;letter-spacing:-0.077px;color:#000;">Messages (3)</div>
<div class="a" style="left:414px;top:175px;width:1506px;height:812px;background:#f0f0f0;border:1px solid #8a929a"></div>
<div class="t" style="left:429px;top:189.0px;letter-spacing:-0.239px;color:#000;">Scene items</div>
<svg style="left:620px;top:190px" width="8" height="11" viewBox="0 0 8 11"><path d="M6.5 1L1.5 5.5L6.5 10" stroke="#4a4039" stroke-width="1.6" fill="none"/></svg>
<div class="a" style="left:420px;top:208px;width:220px;height:1px;background:#8a8a8a;"></div>
<svg style="left:426px;top:220px" width="16" height="16" viewBox="0 0 16 16"><path d="M7 0V13M0.5 6.5H13.5" stroke="#4a4039" stroke-width="3.2"/><path d="M10.5 12.5H15.5L13 15.5Z" fill="#000"/></svg>
<div class="a" style="left:448px;top:217px;width:1px;height:21px;background:#cfcfcf;"></div>
<svg style="left:456px;top:219px" width="18" height="17" viewBox="0 0 18 17"><path d="M0 0H11V3H3V11H0Z" fill="#4a4039"/><path d="M3 3H13V11H3Z" fill="#4a4039" stroke="#f0f0f0" stroke-width="0.8"/><path d="M11 11V17M8 14H14" stroke="#4a4039" stroke-width="2.2"/><path d="M13 15H18L15.5 17Z" fill="#000"/></svg>
<div class="a" style="left:480px;top:217px;width:1px;height:21px;background:#cfcfcf;"></div>
<svg style="left:489px;top:220px" width="16" height="14" viewBox="0 0 16 14"><path d="M15 0.5L7.5 8.5" stroke="#4a4039" stroke-width="1.4"/><path d="M6.5 8Q3 8 3 11Q2.5 13 0 13.5Q5 14.5 7.5 11.5Q8.5 10 8 9Z" fill="#4a4039"/></svg>
<svg style="left:515px;top:219px" width="16" height="16" viewBox="0 0 16 16"><path d="M15 2.5L7.5 10.5" stroke="#4a4039" stroke-width="1.4"/><path d="M6.5 10Q3 10 3 13Q2.5 15 0 15.5Q5 16.5 7.5 13.5Q8.5 12 8 11Z" fill="#4a4039"/><ellipse cx="4.5" cy="3.5" rx="3.8" ry="2.3" fill="none" stroke="#4a4039" stroke-width="1"/><circle cx="4.5" cy="3.5" r="1.1" fill="#4a4039"/></svg>
<div class="a" style="left:539px;top:217px;width:1px;height:21px;background:#cfcfcf;"></div>
<svg style="left:620px;top:219px" width="13" height="16" viewBox="0 0 13 16"><path d="M0 2.5H13M4.5 2.5V0.8H8.5V2.5" stroke="#4a4039" stroke-width="1.5" fill="none"/><path d="M1.5 4.5H11.5V16H1.5Z" fill="#4a4039"/><path d="M4.3 6.5V14M6.5 6.5V14M8.7 6.5V14" stroke="#f0f0f0" stroke-width="1.1"/></svg>
<div class="a" style="left:420px;top:246px;width:220px;height:735px;background:#fff;border:1px solid #8a929a"></div>
<svg style="left:428px;top:253px" width="6" height="9" viewBox="0 0 6 9"><path d="M0.8 0.8L4.8 4.5L0.8 8.2" stroke="#777" stroke-width="1.1" fill="none"/></svg>
<svg style="left:444px;top:251px" width="13" height="13" viewBox="0 0 13 13"><rect x="0.5" y="0.5" width="12" height="12" rx="2.5" fill="#fff" stroke="#5c5c5c" stroke-width="1"/></svg>
<svg style="left:463px;top:249px" width="16" height="16" viewBox="0 0 16 16"><path d="M4.5 1H15.5V10H4.5Z" fill="#fff" stroke="#222" stroke-width="1"/><path d="M7.5 8.5L10 2.5L12.5 8.5M8.4 6.5H11.6" stroke="#222" stroke-width="0.9" fill="none"/><path d="M4.5 10L2 15" stroke="#222" stroke-width="0.9"/></svg>
<div class="t" style="left:485px;top:250.5px;color:#000;font-size:11.5px;">Labels</div>
<div class="a" style="left:441px;top:267px;width:198px;height:20px;background:#f4f4f4;"></div>
<svg style="left:428px;top:273px" width="6" height="9" viewBox="0 0 6 9"><path d="M0.8 0.8L4.8 4.5L0.8 8.2" stroke="#777" stroke-width="1.1" fill="none"/></svg>
<svg style="left:444px;top:271px" width="13" height="13" viewBox="0 0 13 13"><rect x="0.5" y="0.5" width="12" height="12" rx="2.5" fill="#fff" stroke="#5c5c5c" stroke-width="1"/></svg>
<svg style="left:463px;top:269px" width="16" height="16" viewBox="0 0 16 16"><defs><radialGradient id="sph" cx="0.35" cy="0.35" r="0.7"><stop offset="0" stop-color="#fff"/><stop offset="0.6" stop-color="#d0d0d0"/><stop offset="1" stop-color="#8a8a8a"/></radialGradient></defs><circle cx="7" cy="7" r="6.5" fill="url(#sph)"/></svg>
<div class="t" style="left:485px;top:270.5px;letter-spacing:0.227px;color:#000;font-size:11.5px;">Tops</div>
<svg style="left:428px;top:293px" width="6" height="9" viewBox="0 0 6 9"><path d="M0.8 0.8L4.8 4.5L0.8 8.2" stroke="#777" stroke-width="1.1" fill="none"/></svg>
<svg style="left:444px;top:291px" width="13" height="13" viewBox="0 0 13 13"><rect x="0.5" y="0.5" width="12" height="12" rx="2.5" fill="#fff" stroke="#5c5c5c" stroke-width="1"/></svg>
<svg style="left:463px;top:289px" width="16" height="16" viewBox="0 0 16 16"><rect x="1" y="1" width="2" height="9" fill="#e6b82a"/><rect x="1" y="6" width="2" height="6" fill="#d84a2a"/><rect x="5" y="1" width="2" height="7" fill="#3a9ad8"/><rect x="5" y="5" width="2" height="6" fill="#e0c030"/><rect x="9" y="0" width="2" height="9" fill="#e84a20"/><rect x="9" y="5" width="2" height="10" fill="#4ab848"/><rect x="13" y="2" width="2.5" height="8" fill="#2a7ad8"/><rect x="13" y="8" width="2.5" height="7" fill="#e0a020"/></svg>
<div class="t" style="left:485px;top:290.5px;letter-spacing:0.178px;color:#000;font-size:11.5px;">Composites 5m [Fe]</div>
<div class="a" style="left:441px;top:307px;width:198px;height:20px;background:#f4f4f4;"></div>
<svg style="left:428px;top:313px" width="6" height="9" viewBox="0 0 6 9"><path d="M0.8 0.8L4.8 4.5L0.8 8.2" stroke="#777" stroke-width="1.1" fill="none"/></svg>
<svg style="left:444px;top:311px" width="13" height="13" viewBox="0 0 13 13"><rect x="0.5" y="0.5" width="12" height="12" rx="2.5" fill="#fff" stroke="#5c5c5c" stroke-width="1"/></svg>
<svg style="left:463px;top:309px" width="16" height="16" viewBox="0 0 16 16"><path d="M1 4L5 1H16V12L12 15H1Z" fill="#6ac0d0"/><path d="M2 5H11V14H2Z" fill="#7a7a7a"/><path d="M3.5 6.5H9.5V12.5H3.5Z" fill="#c8c8c8"/><path d="M12 4L15 2V11L12 14Z" fill="#e0b030"/></svg>
<div class="t" style="left:485px;top:310.5px;letter-spacing:0.055px;color:#000;font-size:11.5px;">Mesh Surface Facets [Color]</div>
<div class="a" style="left:441px;top:327px;width:198px;height:20px;background:#cce8ff;border:1px solid #0078d7"></div>
<svg style="left:428px;top:333px" width="6" height="9" viewBox="0 0 6 9"><path d="M0.8 0.8L4.8 4.5L0.8 8.2" stroke="#777" stroke-width="1.1" fill="none"/></svg>
<svg style="left:444px;top:331px" width="13" height="13" viewBox="0 0 13 13"><rect x="0.5" y="0.5" width="12" height="12" rx="2" fill="#005fb8" stroke="#005fb8"/><path d="M3.2 6.6L5.5 8.8L9.8 4.3" stroke="#fff" stroke-width="1.1" fill="none"/></svg>
<svg style="left:463px;top:329px" width="16" height="16" viewBox="0 0 16 16"><path d="M1 4L4.5 1H16V12L12.5 15H1Z" fill="#2a9ab0"/><path d="M1 4H12.5V15H1Z" fill="#1e4a8a"/><rect x="1.6" y="4.6" width="3.3" height="3.3" fill="#a8b840"/><rect x="5.3" y="4.6" width="3.3" height="3.3" fill="#8ab83a"/><rect x="9" y="4.6" width="3.3" height="3.3" fill="#b0a838"/><rect x="1.6" y="8.3" width="3.3" height="3.3" fill="#d84a2a"/><rect x="5.3" y="8.3" width="3.3" height="3.3" fill="#3a9a58"/><rect x="9" y="8.3" width="3.3" height="3.3" fill="#e07a28"/><rect x="1.6" y="11.8" width="3.3" height="3" fill="#3a6ad8"/><rect x="5.3" y="11.8" width="3.3" height="3" fill="#3a6ad8"/><rect x="9" y="11.8" width="3.3" height="3" fill="#3a8ad8"/><path d="M12.5 4.5L15.5 2V11.5L12.5 14.5Z" fill="#38b8c8"/><circle cx="14" cy="6" r="0.8" fill="#e0c030"/></svg>
<div class="t" style="left:485px;top:330.5px;letter-spacing:0.099px;color:#000;font-size:11.5px;">Grid Cells [OK-rich ore-Fe-...</div>
<div class="a" style="left:647px;top:183px;width:26px;height:25px;background:#cce8ff;border:1px dashed #99d1ff;border-radius:2px"></div>
<div class="a" style="left:789px;top:183px;width:26px;height:25px;background:#cce8ff;border:1px dashed #99d1ff;border-radius:2px"></div>
<svg style="left:653px;top:189px" width="16" height="15" viewBox="0 0 16 15"><rect x="4.5" y="0.8" width="10.5" height="8" fill="none" stroke="#4a4039" stroke-width="1.5"/><rect x="4.5" y="0.8" width="10.5" height="2.5" fill="#4a4039"/><rect x="0.8" y="6" width="10.5" height="8" fill="#cce8ff" stroke="#4a4039" stroke-width="1.5"/><rect x="0.8" y="6" width="10.5" height="2.5" fill="#4a4039"/></svg>
<svg style="left:679px;top:189px" width="14" height="14" viewBox="0 0 14 14"><path d="M1 1H11L13 3V13H1Z" fill="none" stroke="#a7a7a7" stroke-width="1.6"/><rect x="3.5" y="1" width="6" height="4" fill="#a7a7a7"/><rect x="3.5" y="8" width="7" height="5" fill="#a7a7a7"/></svg>
<svg style="left:705px;top:188px" width="15" height="15" viewBox="0 0 15 15"><path d="M1 1V13.8H13.8V8.5" stroke="#4a4039" stroke-width="2" fill="none"/><path d="M3.5 12.5L4.5 9L11.8 1.7L13.8 3.7L6.5 11Z" fill="#4a4039"/><path d="M1 1H4" stroke="#4a4039" stroke-width="2"/></svg>
<div class="a" style="left:727px;top:186px;width:1px;height:20px;background:#cfcfcf;"></div>
<svg style="left:736px;top:189px" width="6" height="16" viewBox="0 0 6 16"><path d="M1.3 0V15" stroke="#4a4039" stroke-width="2.2"/><rect x="2" y="4.5" width="3.5" height="4" fill="#4a4039"/><rect x="2" y="9.5" width="3.5" height="4" fill="#4a4039"/></svg>
<svg style="left:762px;top:188px" width="17" height="17" viewBox="0 0 17 17"><path d="M2 14.5L15 11.5M14.5 0.5V16" stroke="#4a4039" stroke-width="0.9" stroke-dasharray="1.5 1" fill="none"/><path d="M12.5 0.5L16.5 4.5M16.5 0.5L12.5 4.5M0.5 12.5L4.5 16.5M4.5 12.5L0.5 16.5M12.5 12.5L16.5 16.5M16.5 12.5L12.5 16.5" stroke="#4a4039" stroke-width="1"/><g transform="rotate(-45 5 4.5)" fill="none" stroke="#4a4039" stroke-width="1.2"><rect x="0" y="2.8" width="5.2" height="3.4" rx="1.7"/><rect x="4" y="2.8" width="5.2" height="3.4" rx="1.7"/></g></svg>
<div class="a" style="left:785px;top:186px;width:1px;height:20px;background:#cfcfcf;"></div>
<svg style="left:796px;top:189px" width="15" height="17" viewBox="0 0 15 17"><path d="M3.8 10.5V3.2Q3.8 2 5 2Q6.2 2 6.2 3.2V8.5V1.8Q6.2 0.6 7.4 0.6Q8.6 0.6 8.6 1.8V8.5V2.5Q8.6 1.3 9.8 1.3Q11 1.3 11 2.5V9V4.5Q11 3.3 12.1 3.3Q13.3 3.3 13.3 4.5V11Q13.3 16.3 8.3 16.3Q5.3 16.3 3.8 13.8L1 9.8Q0.4 8.6 1.5 8.3Q2.3 8.1 2.9 8.9L3.8 10.5" fill="#cce8ff" stroke="#4a4039" stroke-width="1.1" stroke-linejoin="round"/></svg>
<svg style="left:818px;top:189px" width="12" height="15" viewBox="0 0 12 15"><path d="M0 0L11 10.5L5.5 10.8L0 15Z" fill="#4a4039"/></svg>
<svg style="left:840px;top:194px" width="7" height="4" viewBox="0 0 7 4"><path d="M0 0H7L3.5 4Z" fill="#4a4039"/></svg>
<svg style="left:853px;top:188px" width="13" height="16" viewBox="0 0 13 16"><path d="M2.5 8.5H0.7V0.7H12.3V8.5H8" stroke="#4a4039" stroke-width="1.3" fill="none"/><path d="M3 5L9 10.5H6L5 15Z" fill="#4a4039"/></svg>
<svg style="left:875px;top:194px" width="7" height="4" viewBox="0 0 7 4"><path d="M0 0H7L3.5 4Z" fill="#4a4039"/></svg>
<svg style="left:892px;top:191px" width="12" height="12" viewBox="0 0 12 12"><rect x="0" y="0.00" width="1.6" height="1.5" fill="#4a4039"/><rect x="2.6" y="0.00" width="3.6" height="1.5" fill="#4a4039"/><rect x="7.4" y="0.00" width="4.4" height="1.5" fill="#4a4039"/><rect x="0" y="2.45" width="1.6" height="1.5" fill="#4a4039"/><rect x="2.6" y="2.45" width="3.6" height="1.5" fill="#4a4039"/><rect x="7.4" y="2.45" width="4.4" height="1.5" fill="#4a4039"/><rect x="0" y="4.90" width="1.6" height="1.5" fill="#4a4039"/><rect x="2.6" y="4.90" width="3.6" height="1.5" fill="#4a4039"/><rect x="7.4" y="4.90" width="4.4" height="1.5" fill="#4a4039"/><rect x="0" y="7.35" width="1.6" height="1.5" fill="#4a4039"/><rect x="2.6" y="7.35" width="3.6" height="1.5" fill="#4a4039"/><rect x="7.4" y="7.35" width="4.4" height="1.5" fill="#4a4039"/><rect x="0" y="9.80" width="1.6" height="1.5" fill="#4a4039"/><rect x="2.6" y="9.80" width="3.6" height="1.5" fill="#4a4039"/><rect x="7.4" y="9.80" width="4.4" height="1.5" fill="#4a4039"/></svg>
<svg style="left:915px;top:188px" width="17" height="17" viewBox="0 0 17 17"><circle cx="8.5" cy="8.5" r="6" fill="none" stroke="#4a4039" stroke-width="2"/><path d="M8.5 0V4M8.5 13V17M0 8.5H4M13 8.5H17" stroke="#4a4039" stroke-width="2"/></svg>
<svg style="left:942px;top:188px" width="17" height="16" viewBox="0 0 17 16"><path d="M0.5 12L4 5L7 9L10 2L13 8L16.5 6" stroke="#4a4039" stroke-width="1.1" fill="none"/><path d="M0.5 15.5H16.5" stroke="#4a4039" stroke-width="1.3"/><path d="M1.5 12.5V15M3.5 12V15M5.5 12V15M7.5 12V15M9.5 12V15M11.5 12V15M13.5 12V15M15.5 12V15" stroke="#4a4039" stroke-width="0.8"/></svg>
<div class="a" style="left:965px;top:186px;width:1px;height:20px;background:#cfcfcf;"></div>
<svg style="left:974px;top:189px" width="15" height="15" viewBox="0 0 15 15"><path d="M0.8 2L13.8 0.8L14.2 13.5L0.8 14.2Z" fill="none" stroke="#4a4039" stroke-width="1.4" stroke-linejoin="round"/><path d="M6 2.5V6.8H12.5M6 6.8L2.3 11.5" stroke="#4a4039" stroke-width="0.9" stroke-dasharray="1 1" fill="none"/></svg>
<svg style="left:998px;top:188px" width="17" height="17" viewBox="0 0 17 17"><path d="M0.8 4.5V0.8H4.5M12.5 0.8H16.2V4.5M16.2 12.5V16.2H12.5M4.5 16.2H0.8V12.5" stroke="#4a4039" stroke-width="1.6" fill="none"/><circle cx="7.5" cy="7" r="3" fill="none" stroke="#4a4039" stroke-width="1.6"/><path d="M9.8 9.3L12 11.5" stroke="#4a4039" stroke-width="2"/></svg>
<svg style="left:1020px;top:194px" width="7" height="4" viewBox="0 0 7 4"><path d="M0 0H7L3.5 4Z" fill="#4a4039"/></svg>
<div class="a" style="left:1032px;top:186px;width:1px;height:20px;background:#cfcfcf;"></div>
<svg style="left:1039px;top:188px" width="17" height="17" viewBox="0 0 17 17"><path d="M3.5 0.8H16.2V12.5H3.5ZM3.5 4.8H16.2M3.5 8.6H16.2M7.8 0.8V12.5M12 0.8V12.5M3.5 0.8L0.5 3V15.8L3.5 12.5M0.5 15.8H13.5L16.2 12.5M0.5 7L3.5 4.8M0.5 11L3.5 8.6M4.5 15.8L7.8 12.5M9 15.8L12 12.5" stroke="#4a4039" stroke-width="0.9" stroke-dasharray="1 0.9" fill="none"/></svg>
<svg style="left:1061px;top:194px" width="7" height="4" viewBox="0 0 7 4"><path d="M0 0H7L3.5 4Z" fill="#4a4039"/></svg>
<div class="a" style="left:1073px;top:186px;width:1px;height:20px;background:#cfcfcf;"></div>
<svg style="left:1082px;top:189px" width="15" height="15" viewBox="0 0 15 15"><path d="M3.5 1L12 0.5L14.5 12L9 14.5H1.5Z" fill="#4a4039"/><path d="M3.5 4.5L9 3.5L10 12.5H3Z" fill="#f0f0f0"/><path d="M5 6V11" stroke="#4a4039" stroke-width="0.8" stroke-dasharray="1 1"/></svg>
<svg style="left:1107px;top:188px" width="16" height="17" viewBox="0 0 16 17"><path d="M6 1H14L10 9H2Z" fill="none" stroke="#4a4039" stroke-width="1.2"/><path d="M0 12L16 16" stroke="#4a4039" stroke-width="0.9" stroke-dasharray="1.5 1.5"/><path d="M8 0L14 1" stroke="#4a4039" stroke-width="0.9"/></svg>
<svg style="left:1128px;top:194px" width="7" height="4" viewBox="0 0 7 4"><path d="M0 0H7L3.5 4Z" fill="#4a4039"/></svg>
<svg style="left:1142px;top:188px" width="14" height="17" viewBox="0 0 14 17"><path d="M5 1H13L9 8H1Z" fill="none" stroke="#4a4039" stroke-width="1.2"/><path d="M1 11L13 14M1 16L13 10" stroke="#4a4039" stroke-width="0.9" stroke-dasharray="1.5 1.5"/></svg>
<svg style="left:1163px;top:194px" width="7" height="4" viewBox="0 0 7 4"><path d="M0 0H7L3.5 4Z" fill="#4a4039"/></svg>
<svg style="left:1178px;top:188px" width="17" height="17" viewBox="0 0 17 17"><path d="M0.8 5V0.8H5M12 0.8H16.2V5M16.2 12V16.2H12M5 16.2H0.8V12" stroke="#4a4039" stroke-width="1.8" fill="none"/></svg>
<svg style="left:1204px;top:188px" width="17" height="17" viewBox="0 0 17 17"><path d="M0 1L4 4.5L0 7.5M4 4.5H8" stroke="#4a4039" stroke-width="1.4" fill="none"/><path d="M9 6H16V16H9Z" fill="#4a4039"/><path d="M5 8H12V9.5H6.5V13H5Z" fill="#4a4039"/></svg>
<svg style="left:1230px;top:188px" width="17" height="17" viewBox="0 0 17 17"><path d="M0 1L4 4.5L0 7.5M4 4.5H8" stroke="#4a4039" stroke-width="1.4" fill="none"/><path d="M6.5 5.5H15.5V16.5H6.5Z" fill="none" stroke="#4a4039" stroke-width="1.3"/><path d="M8.5 10H13.5M8.5 12.5H13.5M8.5 14.5H13.5" stroke="#4a4039" stroke-width="1"/><circle cx="11" cy="4" r="2.5" fill="#4a4039"/></svg>
<svg style="left:1256px;top:188px" width="17" height="17" viewBox="0 0 17 17"><path d="M0 1L4 4.5L0 7.5M4 4.5H8" stroke="#4a4039" stroke-width="1.4" fill="none"/><path d="M6.5 7.5H15.5V16.5H6.5Z" fill="none" stroke="#4a4039" stroke-width="1.3"/><path d="M7 16L10.5 11L13 13.5L15.5 11" stroke="#4a4039" stroke-width="1.2" fill="none"/><circle cx="12" cy="6" r="2.2" fill="#4a4039"/></svg>
<div class="a" style="left:1279px;top:186px;width:1px;height:20px;background:#cfcfcf;"></div>
<div class="t" style="left:1283px;top:190.0px;letter-spacing:-0.584px;color:#000;font-size:11.5px;">Z Scale</div>
<div class="a" style="left:1320px;top:184px;width:46px;height:24px;background:#fff;border-bottom:1px solid #cfcfcf;box-shadow:0 0 0 1px #ececec"></div>
<div class="t" style="left:1324px;top:190.0px;color:#000;font-size:11.5px;">3</div>
<svg style="left:1352px;top:194px" width="10" height="6" viewBox="0 0 10 6"><path d="M0.5 0.5L5 5L9.5 0.5" stroke="#555" stroke-width="1" fill="none"/></svg>
<svg style="left:1374px;top:190px" width="9" height="12" viewBox="0 0 9 12"><path d="M4.5 0Q9 0 9 4.5Q9 7 7 8.5V9.5H2V8.5Q0 7 0 4.5Q0 0 4.5 0Z" fill="#4a4039"/><rect x="2.5" y="10" width="4" height="2" fill="#4a4039"/></svg>
<svg style="left:1393px;top:188px" width="14" height="16" viewBox="0 0 14 16"><g stroke="#4a4039" stroke-width="1.3" fill="#f0f0f0"><path d="M0 3H14M0 8H14M0 13H14"/><circle cx="8.5" cy="3" r="2"/><circle cx="3.5" cy="8" r="2"/><circle cx="10" cy="13" r="2"/></g></svg>
<div class="a" style="left:1413px;top:186px;width:1px;height:20px;background:#cfcfcf;"></div>
<svg style="left:1424px;top:189px" width="11" height="15" viewBox="0 0 11 15"><path d="M1.5 4.5Q1.5 1 5.5 1Q9.5 1 9.5 4.5Q9.5 6.5 7 7.7Q5.5 8.4 5.5 10.5" stroke="#4a4039" stroke-width="2.4" fill="none"/><circle cx="5.5" cy="13.5" r="1.5" fill="#4a4039"/></svg>
<div class="a" style="left:645px;top:211px;width:1269px;height:770px;background:#000;"></div>
<svg style="left:0;top:0" width="1920" height="1005"><defs><clipPath id="mc"><polygon points="1488.0,302.0 1508.0,302.0 1508.0,309.0 1527.0,310.0 1527.0,328.0 1538.0,329.0 1538.0,341.0 1535.0,353.0 1542.0,354.0 1542.0,364.0 1558.0,367.0 1558.0,381.0 1570.0,384.0 1570.0,392.0 1586.0,393.0 1586.0,403.0 1582.0,416.0 1580.0,430.0 1569.0,440.0 1558.0,448.0 1549.0,451.0 1549.0,478.0 1542.0,486.0 1522.0,490.0 1512.0,505.0 1496.0,509.0 1488.0,513.0 1483.0,526.0 1480.0,542.0 1478.0,556.0 1482.0,559.0 1482.0,586.0 1497.0,588.0 1497.0,602.0 1486.0,621.0 1485.0,653.0 1475.0,672.0 1488.0,678.0 1488.0,717.0 1457.0,723.0 1451.0,749.0 1440.0,768.0 1436.0,768.0 1421.0,773.0 1412.0,787.0 1390.0,788.0 1368.0,808.0 1353.0,812.0 1331.0,824.0 1316.0,817.0 1303.0,825.0 1287.0,832.0 1274.0,842.0 1243.0,836.0 1237.0,841.0 1219.0,847.0 1202.0,856.0 1191.0,852.0 1182.0,861.0 1165.0,858.0 1152.0,884.0 1128.0,873.0 1106.0,865.0 1095.0,847.0 1053.0,834.0 1040.0,823.0 1036.0,812.0 1021.0,810.0 1028.0,788.0 1012.0,775.0 1017.0,758.0 1001.0,753.0 985.0,745.0 964.0,734.0 945.0,729.0 929.0,713.0 934.0,699.0 926.0,694.0 926.0,691.0 937.0,678.0 950.0,664.0 968.0,659.0 977.0,654.0 988.0,642.0 1004.0,643.0 1028.0,647.0 1036.0,642.0 1050.0,647.0 1077.0,655.0 1098.0,660.0 1122.0,656.0 1130.0,648.0 1146.0,652.0 1162.0,655.0 1176.0,643.0 1183.0,638.0 1200.0,634.0 1226.0,631.0 1228.0,621.0 1242.0,617.0 1257.0,603.0 1269.0,599.0 1279.0,594.0 1289.0,587.0 1289.0,573.0 1282.0,569.0 1281.0,555.0 1285.0,540.0 1297.0,521.0 1309.0,518.0 1309.0,509.0 1314.0,502.0 1312.0,488.0 1311.0,468.0 1315.0,452.0 1316.0,440.0 1324.0,428.0 1334.0,424.0 1334.0,414.0 1343.0,410.0 1366.0,411.0 1373.0,405.0 1398.0,403.0 1405.0,392.0 1424.0,385.0 1443.0,381.0 1445.0,371.0 1449.0,352.0 1451.0,322.0 1469.0,322.0 1476.0,307.0"/></clipPath></defs><g clip-path="url(#mc)"><polygon points="1488.0,302.0 1508.0,302.0 1508.0,309.0 1527.0,310.0 1527.0,328.0 1538.0,329.0 1538.0,341.0 1535.0,353.0 1542.0,354.0 1542.0,364.0 1558.0,367.0 1558.0,381.0 1570.0,384.0 1570.0,392.0 1586.0,393.0 1586.0,403.0 1582.0,416.0 1580.0,430.0 1569.0,440.0 1558.0,448.0 1549.0,451.0 1549.0,478.0 1542.0,486.0 1522.0,490.0 1512.0,505.0 1496.0,509.0 1488.0,513.0 1483.0,526.0 1480.0,542.0 1478.0,556.0 1482.0,559.0 1482.0,586.0 1497.0,588.0 1497.0,602.0 1486.0,621.0 1485.0,653.0 1475.0,672.0 1488.0,678.0 1488.0,717.0 1457.0,723.0 1451.0,749.0 1440.0,768.0 1436.0,768.0 1421.0,773.0 1412.0,787.0 1390.0,788.0 1368.0,808.0 1353.0,812.0 1331.0,824.0 1316.0,817.0 1303.0,825.0 1287.0,832.0 1274.0,842.0 1243.0,836.0 1237.0,841.0 1219.0,847.0 1202.0,856.0 1191.0,852.0 1182.0,861.0 1165.0,858.0 1152.0,884.0 1128.0,873.0 1106.0,865.0 1095.0,847.0 1053.0,834.0 1040.0,823.0 1036.0,812.0 1021.0,810.0 1028.0,788.0 1012.0,775.0 1017.0,758.0 1001.0,753.0 985.0,745.0 964.0,734.0 945.0,729.0 929.0,713.0 934.0,699.0 926.0,694.0 926.0,691.0 937.0,678.0 950.0,664.0 968.0,659.0 977.0,654.0 988.0,642.0 1004.0,643.0 1028.0,647.0 1036.0,642.0 1050.0,647.0 1077.0,655.0 1098.0,660.0 1122.0,656.0 1130.0,648.0 1146.0,652.0 1162.0,655.0 1176.0,643.0 1183.0,638.0 1200.0,634.0 1226.0,631.0 1228.0,621.0 1242.0,617.0 1257.0,603.0 1269.0,599.0 1279.0,594.0 1289.0,587.0 1289.0,573.0 1282.0,569.0 1281.0,555.0 1285.0,540.0 1297.0,521.0 1309.0,518.0 1309.0,509.0 1314.0,502.0 1312.0,488.0 1311.0,468.0 1315.0,452.0 1316.0,440.0 1324.0,428.0 1334.0,424.0 1334.0,414.0 1343.0,410.0 1366.0,411.0 1373.0,405.0 1398.0,403.0 1405.0,392.0 1424.0,385.0 1443.0,381.0 1445.0,371.0 1449.0,352.0 1451.0,322.0 1469.0,322.0 1476.0,307.0" fill="#a8a040"/><polygon points="1449.1,322.3 1476.4,307.1 1506.8,302.6 1528.0,310.2 1537.2,331.4 1537.2,355.7 1558.4,364.8 1570.5,383.0 1585.7,395.2 1585.7,404.3 1543.2,392.1 1500.7,383.0 1482.5,377.0 1452.1,380.0 1446.1,364.8" fill="#68b84b"/><polygon points="1500.7,310.2 1528.0,310.2 1537.2,331.4 1528.0,352.7 1500.7,352.7" fill="#94b23c"/><polygon points="1452.1,328.4 1482.5,328.4 1482.5,340.5 1452.1,340.5" fill="#5aa848"/><polygon points="1488.6,349.6 1522.0,349.6 1531.1,364.8 1512.9,377.0 1488.6,377.0" fill="#3caf78"/><polygon points="1500.7,352.7 1525.0,352.7 1525.0,364.8 1500.7,364.8" fill="#379ca0"/><polygon points="1531.1,370.9 1549.3,370.9 1549.3,386.1 1531.1,386.1" fill="#c27c2e"/><polygon points="1291.0,396.9 1461.2,361.0 1407.5,404.0 1382.4,423.7 1377.0,452.4 1353.7,470.3 1310.7,477.5 1291.0,477.5" fill="#3b50b2"/><polygon points="1285.7,470.3 1353.7,470.3 1341.2,506.1 1285.7,506.1" fill="#379ca0"/><polygon points="1285.7,506.1 1341.2,506.1 1328.7,550.0 1285.7,550.0" fill="#3479c0"/><polygon points="1310.7,445.2 1339.4,441.6 1335.8,463.1 1310.7,470.3" fill="#3479c0"/><polygon points="1461.2,361.0 1407.5,404.0 1382.4,423.7 1377.0,452.4 1353.7,470.3 1341.2,506.1 1328.7,550.0 1350.2,550.0 1359.1,506.1 1378.8,477.5 1396.7,441.6 1400.3,414.8 1425.4,391.5" fill="#3caf78"/><polygon points="1425.4,391.5 1400.3,414.8 1396.7,441.6 1378.8,477.5 1400.3,477.5 1414.6,450.6 1429.0,414.8 1457.6,377.2" fill="#94b23c"/><polygon points="1378.8,477.5 1359.1,506.1 1350.2,550.0 1375.2,550.0 1386.0,509.7 1400.3,477.5" fill="#b0a03a"/><polygon points="1270.0,540.0 1330.0,535.0 1325.0,585.0 1300.0,600.0 1270.0,600.0" fill="#379ca0"/><polygon points="1280.0,575.0 1310.0,575.0 1305.0,605.0 1280.0,605.0" fill="#3caf78"/><polygon points="1300.0,520.0 1340.0,520.0 1330.0,560.0 1300.0,560.0" fill="#3479c0"/><polygon points="1318.0,545.0 1352.0,530.0 1362.0,560.0 1348.0,612.0 1312.0,612.0" fill="#a2aa3a"/><polygon points="1160.0,650.0 1230.0,612.0 1275.0,585.0 1295.0,590.0 1290.0,620.0 1240.0,645.0 1160.0,660.0" fill="#5ab850"/><polygon points="1449.1,416.4 1458.2,383.0 1497.7,380.0 1500.7,386.1 1494.7,404.3 1488.6,428.6 1479.5,446.8 1467.3,465.0 1452.1,489.3 1440.0,513.6 1440.0,537.9 1427.9,562.2 1421.8,600.1 1348.9,600.1 1361.1,568.2 1370.2,537.9 1385.4,507.5 1400.5,483.2 1415.7,458.9 1433.9,437.7" fill="#c27c2e"/><polygon points="1464.3,389.1 1485.5,389.1 1485.5,401.3 1464.3,401.3" fill="#bb5a1c"/><polygon points="1494.7,404.3 1500.7,386.1 1522.0,392.1 1531.1,410.4 1537.2,440.7 1525.0,465.0 1500.7,477.1 1482.5,483.2 1467.3,507.5 1458.2,537.9 1452.1,568.2 1440.0,600.1 1421.8,600.1 1427.9,562.2 1440.0,537.9 1440.0,513.6 1452.1,489.3 1467.3,465.0 1479.5,446.8 1488.6,428.6" fill="#b0a03a"/><polygon points="1476.4,458.9 1500.7,458.9 1500.7,495.4 1476.4,495.4" fill="#94b23c"/><polygon points="1433.9,531.8 1461.3,531.8 1461.3,559.1 1433.9,559.1" fill="#68b84b"/><polygon points="1503.8,383.0 1543.2,386.1 1555.4,398.2 1552.3,440.7 1531.1,434.6 1512.9,416.4" fill="#3caf78"/><polygon points="1518.9,410.4 1543.2,410.4 1543.2,428.6 1518.9,428.6" fill="#3479c0"/><polygon points="1549.3,404.3 1582.7,401.3 1582.7,440.7 1549.3,440.7" fill="#c27c2e"/><polygon points="1518.9,440.7 1549.3,440.7 1549.3,495.4 1518.9,495.4" fill="#c27c2e"/><polygon points="1528.0,446.8 1549.3,446.8 1549.3,465.0 1528.0,465.0" fill="#bb5a1c"/><polygon points="1497.7,477.1 1522.0,477.1 1522.0,495.4 1497.7,495.4" fill="#3b50b2"/><polygon points="1461.3,556.1 1482.5,556.1 1482.5,600.1 1461.3,600.1" fill="#3caf78"/><polygon points="926.2,691.1 957.0,663.3 987.9,641.7 1043.4,641.7 1092.8,657.1 1136.0,647.9 1166.8,654.1 1185.4,638.6 1228.5,632.5 1259.4,604.7 1290.3,580.0 1308.8,580.0 1290.3,598.5 1259.4,626.3 1228.5,651.0 1185.4,660.2 1136.0,672.6 1092.8,675.6 1043.4,672.6 997.1,672.6 960.1,681.8 938.5,697.2" fill="#3caf78"/><polygon points="975.5,641.7 1006.4,641.7 1006.4,660.2 975.5,660.2" fill="#3479c0"/><polygon points="1129.8,647.9 1148.3,647.9 1148.3,663.3 1129.8,663.3" fill="#3b50b2"/><polygon points="1074.3,657.1 1117.5,657.1 1117.5,669.5 1074.3,669.5" fill="#3479c0"/><polygon points="926.2,691.1 950.9,672.6 1012.6,669.5 1012.6,681.8 957.0,697.2 950.9,721.9 960.1,734.3 981.7,740.4 1012.6,752.8 1006.4,759.0 966.3,740.4 932.3,715.8" fill="#94b23c"/><polygon points="950.9,697.2 981.7,684.9 1021.8,681.8 1024.9,718.8 1012.6,740.4 1012.6,752.8 981.7,740.4 957.0,721.9" fill="#379ca0"/><polygon points="969.4,703.4 1000.2,700.3 1006.4,725.0 1012.6,749.7 981.7,740.4" fill="#3479c0"/><polygon points="1012.6,697.2 1092.8,672.6 1197.7,666.4 1259.4,666.4 1305.7,684.9 1318.0,697.2 1290.3,721.9 1259.4,752.8 1244.0,796.0 1228.5,826.8 1197.7,845.4 1160.7,876.2 1136.0,876.2 1092.8,857.7 1043.4,826.8 1024.9,808.3 1012.6,774.4 1024.9,746.6" fill="#c27c2e"/><polygon points="1055.8,715.8 1092.8,709.6 1092.8,752.8 1061.9,752.8" fill="#bb5a1c"/><polygon points="1080.4,725.0 1136.0,721.9 1111.3,765.1 1136.0,777.5 1114.4,796.0 1080.4,783.6" fill="#bb5a1c"/><polygon points="1105.1,796.0 1163.8,802.2 1163.8,833.0 1105.1,820.7" fill="#bb5a1c"/><polygon points="1012.6,752.8 1049.6,752.8 1049.6,783.6 1012.6,777.5" fill="#bb5a1c"/><polygon points="1136.0,675.6 1247.1,681.8 1247.1,694.2 1136.0,684.9" fill="#bb5a1c"/><polygon points="1021.8,796.0 1105.1,814.5 1105.1,857.7 1049.6,842.3 1024.9,814.5" fill="#b0a03a"/><polygon points="1148.3,691.1 1197.7,697.2 1197.7,715.8 1148.3,709.6" fill="#b0a03a"/><polygon points="1173.0,641.7 1228.5,635.5 1259.4,617.0 1290.3,598.5 1305.7,610.9 1274.8,641.7 1228.5,666.4 1166.8,669.5" fill="#94b23c"/><polygon points="1136.0,740.4 1225.5,740.4 1225.5,796.0 1136.0,796.0" fill="#68b84b"/><polygon points="1157.6,759.0 1185.4,759.0 1185.4,780.6 1157.6,780.6" fill="#379ca0"/><polygon points="1284.1,703.4 1321.1,703.4 1367.4,697.2 1429.1,672.6 1466.1,666.4 1463.0,752.8 1444.5,771.3 1413.7,789.8 1352.0,780.6 1321.1,777.5 1281.0,765.1" fill="#68b84b"/><polygon points="1314.9,725.0 1382.8,734.3 1382.8,777.5 1314.9,765.1" fill="#379ca0"/><polygon points="1321.1,728.1 1358.1,734.3 1358.1,752.8 1321.1,746.6" fill="#3caf78"/><polygon points="1308.8,580.0 1475.4,580.0 1472.3,672.6 1429.1,672.6 1367.4,697.2 1321.1,703.4 1284.1,703.4 1265.6,672.6 1290.3,626.3" fill="#b0a03a"/><polygon points="1345.8,580.0 1413.7,580.0 1401.3,657.1 1352.0,657.1" fill="#c27c2e"/><polygon points="1393.6,589.3 1422.9,589.3 1422.9,615.5 1393.6,615.5" fill="#68b84b"/><polygon points="1419.8,620.1 1446.1,620.1 1446.1,649.4 1419.8,649.4" fill="#68b84b"/><polygon points="1348.9,632.5 1373.6,632.5 1373.6,651.0 1348.9,651.0" fill="#bb5a1c"/><polygon points="1228.5,796.0 1290.3,780.6 1382.8,792.9 1376.6,814.5 1321.1,820.7 1290.3,836.1 1244.0,839.2 1228.5,826.8" fill="#98a04a"/><polygon points="1259.4,777.5 1305.7,777.5 1305.7,796.0 1259.4,796.0" fill="#c27c2e"/><polygon points="1321.1,789.8 1367.4,789.8 1358.1,808.3 1321.1,814.5" fill="#c27c2e"/><polygon points="1244.0,814.5 1290.3,814.5 1290.3,836.1 1244.0,839.2" fill="#379ca0"/><polygon points="1456.9,675.6 1487.7,681.8 1487.7,718.8 1456.9,718.8" fill="#3caf78"/><polygon points="1469.2,586.2 1497.0,586.2 1497.0,610.9 1469.2,610.9" fill="#379ca0"/><polygon points="1092.8,833.0 1160.7,845.4 1160.7,882.4 1136.0,876.2 1105.1,857.7" fill="#b0a03a"/><polygon points="1197.7,765.1 1244.0,740.4 1259.4,765.1 1244.0,811.4 1213.1,814.5" fill="#94b23c"/><polygon points="1225.5,796.0 1253.2,774.4 1251.7,820.7 1231.6,833.0" fill="#7a5a22"/><polygon points="1432.5,459.6 1480.0,456.0 1480.0,506.1 1432.5,506.1" fill="#b0a03a"/><polygon points="1448.7,473.9 1472.0,473.9 1472.0,491.8 1448.7,491.8" fill="#68b84b"/><polygon points="1396.7,414.8 1425.4,414.8 1425.4,441.6 1396.7,441.6" fill="#b0a03a"/><polygon points="1283.7,599.1 1316.0,575.8 1344.6,593.7 1333.9,647.4 1312.4,688.6 1262.2,688.6 1240.7,665.4" fill="#9eae3c"/><polygon points="1346.4,647.4 1414.5,658.2 1410.9,677.9 1376.8,685.1 1316.0,692.2 1314.2,676.1 1330.3,654.6" fill="#c27c2e"/><polygon points="1330.3,540.0 1366.1,540.0 1355.4,575.8 1337.4,593.7" fill="#a8a83a"/><polygon points="949.9,662.8 1024.5,665.8 1100.0,679.3 1100.0,692.7 1031.9,689.7 1009.6,686.7 970.7,674.8 946.9,676.3" fill="#b0a03a"/><polygon points="936.4,673.3 970.7,673.3 970.7,695.7 936.4,695.7" fill="#c27c2e"/><polygon points="997.6,674.8 1018.5,674.8 1018.5,686.7 997.6,686.7" fill="#c27c2e"/><polygon points="976.7,641.9 1003.6,641.9 1003.6,658.4 976.7,658.4" fill="#3479c0"/><polygon points="991.6,646.4 1005.1,646.4 1005.1,659.9 991.6,659.9" fill="#3a4a70"/><polygon points="1015.5,641.2 1048.4,641.2 1048.4,658.4 1015.5,658.4" fill="#379ca0"/><polygon points="969.3,655.4 988.7,655.4 988.7,667.3 969.3,667.3" fill="#3caf78"/><polygon points="984.2,658.4 1027.5,658.4 1027.5,668.8 984.2,668.8" fill="#94b23c"/><polygon points="948.4,692.7 975.2,692.7 975.2,713.6 948.4,713.6" fill="#3caf78"/><polygon points="964.8,697.2 991.6,697.2 991.6,718.1 964.8,718.1" fill="#379ca0"/><polygon points="979.7,701.6 1008.1,701.6 1008.1,722.5 979.7,722.5" fill="#3479c0"/><polygon points="994.6,685.2 1024.5,685.2 1024.5,700.1 994.6,700.1" fill="#379ca0"/><polygon points="996.1,707.6 1024.5,707.6 1024.5,731.5 996.1,731.5" fill="#379ca0"/><polygon points="969.3,718.1 997.6,722.5 1012.5,753.9 1000.6,753.9" fill="#2f5a9a"/><polygon points="1011.0,686.7 1054.3,692.7 1054.3,737.5 1011.0,737.5" fill="#b0a03a"/><polygon points="1051.3,707.6 1094.6,713.6 1069.3,749.4 1051.3,746.4" fill="#bb5a1c"/><polygon points="916.0,695.0 936.0,700.0 944.0,685.0 924.0,680.0" fill="#000" fill-opacity="0.06"/><polygon points="928.0,715.0 948.0,720.0 956.0,705.0 936.0,700.0" fill="#000" fill-opacity="0.14"/><polygon points="952.0,670.0 972.0,675.0 980.0,660.0 960.0,655.0" fill="#000" fill-opacity="0.06"/><polygon points="940.0,735.0 960.0,740.0 968.0,725.0 948.0,720.0" fill="#000" fill-opacity="0.06"/><polygon points="948.0,720.0 968.0,725.0 976.0,710.0 956.0,705.0" fill="#000" fill-opacity="0.14"/><polygon points="956.0,705.0 976.0,710.0 984.0,695.0 964.0,690.0" fill="#000" fill-opacity="0.14"/><polygon points="964.0,690.0 984.0,695.0 992.0,680.0 972.0,675.0" fill="#000" fill-opacity="0.14"/><polygon points="980.0,660.0 1000.0,665.0 1008.0,650.0 988.0,645.0" fill="#000" fill-opacity="0.06"/><polygon points="960.0,740.0 980.0,745.0 988.0,730.0 968.0,725.0" fill="#000" fill-opacity="0.06"/><polygon points="984.0,695.0 1004.0,700.0 1012.0,685.0 992.0,680.0" fill="#000" fill-opacity="0.14"/><polygon points="992.0,680.0 1012.0,685.0 1020.0,670.0 1000.0,665.0" fill="#000" fill-opacity="0.14"/><polygon points="1028.0,655.0 1048.0,660.0 1056.0,645.0 1036.0,640.0" fill="#000" fill-opacity="0.06"/><polygon points="1008.0,735.0 1028.0,740.0 1036.0,725.0 1016.0,720.0" fill="#000" fill-opacity="0.14"/><polygon points="1024.0,705.0 1044.0,710.0 1052.0,695.0 1032.0,690.0" fill="#000" fill-opacity="0.1"/><polygon points="1040.0,675.0 1060.0,680.0 1068.0,665.0 1048.0,660.0" fill="#000" fill-opacity="0.1"/><polygon points="1048.0,660.0 1068.0,665.0 1076.0,650.0 1056.0,645.0" fill="#000" fill-opacity="0.1"/><polygon points="1020.0,755.0 1040.0,760.0 1048.0,745.0 1028.0,740.0" fill="#000" fill-opacity="0.14"/><polygon points="1036.0,725.0 1056.0,730.0 1064.0,715.0 1044.0,710.0" fill="#000" fill-opacity="0.14"/><polygon points="1060.0,680.0 1080.0,685.0 1088.0,670.0 1068.0,665.0" fill="#fff" fill-opacity="0.06"/><polygon points="1024.0,790.0 1044.0,795.0 1052.0,780.0 1032.0,775.0" fill="#000" fill-opacity="0.14"/><polygon points="1048.0,745.0 1068.0,750.0 1076.0,735.0 1056.0,730.0" fill="#000" fill-opacity="0.14"/><polygon points="1064.0,715.0 1084.0,720.0 1092.0,705.0 1072.0,700.0" fill="#000" fill-opacity="0.1"/><polygon points="1088.0,670.0 1108.0,675.0 1116.0,660.0 1096.0,655.0" fill="#000" fill-opacity="0.1"/><polygon points="1028.0,825.0 1048.0,830.0 1056.0,815.0 1036.0,810.0" fill="#fff" fill-opacity="0.1"/><polygon points="1044.0,795.0 1064.0,800.0 1072.0,785.0 1052.0,780.0" fill="#000" fill-opacity="0.1"/><polygon points="1076.0,735.0 1096.0,740.0 1104.0,725.0 1084.0,720.0" fill="#fff" fill-opacity="0.1"/><polygon points="1092.0,705.0 1112.0,710.0 1120.0,695.0 1100.0,690.0" fill="#000" fill-opacity="0.06"/><polygon points="1100.0,690.0 1120.0,695.0 1128.0,680.0 1108.0,675.0" fill="#000" fill-opacity="0.06"/><polygon points="1108.0,675.0 1128.0,680.0 1136.0,665.0 1116.0,660.0" fill="#000" fill-opacity="0.14"/><polygon points="1116.0,660.0 1136.0,665.0 1144.0,650.0 1124.0,645.0" fill="#000" fill-opacity="0.06"/><polygon points="1048.0,830.0 1068.0,835.0 1076.0,820.0 1056.0,815.0" fill="#000" fill-opacity="0.14"/><polygon points="1056.0,815.0 1076.0,820.0 1084.0,805.0 1064.0,800.0" fill="#fff" fill-opacity="0.14"/><polygon points="1120.0,695.0 1140.0,700.0 1148.0,685.0 1128.0,680.0" fill="#000" fill-opacity="0.1"/><polygon points="1136.0,665.0 1156.0,670.0 1164.0,655.0 1144.0,650.0" fill="#fff" fill-opacity="0.06"/><polygon points="1068.0,835.0 1088.0,840.0 1096.0,825.0 1076.0,820.0" fill="#000" fill-opacity="0.06"/><polygon points="1076.0,820.0 1096.0,825.0 1104.0,810.0 1084.0,805.0" fill="#000" fill-opacity="0.06"/><polygon points="1108.0,760.0 1128.0,765.0 1136.0,750.0 1116.0,745.0" fill="#000" fill-opacity="0.06"/><polygon points="1116.0,745.0 1136.0,750.0 1144.0,735.0 1124.0,730.0" fill="#fff" fill-opacity="0.1"/><polygon points="1140.0,700.0 1160.0,705.0 1168.0,690.0 1148.0,685.0" fill="#fff" fill-opacity="0.1"/><polygon points="1164.0,655.0 1184.0,660.0 1192.0,645.0 1172.0,640.0" fill="#000" fill-opacity="0.06"/><polygon points="1120.0,780.0 1140.0,785.0 1148.0,770.0 1128.0,765.0" fill="#000" fill-opacity="0.14"/><polygon points="1152.0,720.0 1172.0,725.0 1180.0,710.0 1160.0,705.0" fill="#fff" fill-opacity="0.14"/><polygon points="1168.0,690.0 1188.0,695.0 1196.0,680.0 1176.0,675.0" fill="#fff" fill-opacity="0.1"/><polygon points="1176.0,675.0 1196.0,680.0 1204.0,665.0 1184.0,660.0" fill="#000" fill-opacity="0.06"/><polygon points="1192.0,645.0 1212.0,650.0 1220.0,635.0 1200.0,630.0" fill="#000" fill-opacity="0.06"/><polygon points="1116.0,830.0 1136.0,835.0 1144.0,820.0 1124.0,815.0" fill="#fff" fill-opacity="0.06"/><polygon points="1132.0,800.0 1152.0,805.0 1160.0,790.0 1140.0,785.0" fill="#000" fill-opacity="0.14"/><polygon points="1172.0,725.0 1192.0,730.0 1200.0,715.0 1180.0,710.0" fill="#fff" fill-opacity="0.14"/><polygon points="1180.0,710.0 1200.0,715.0 1208.0,700.0 1188.0,695.0" fill="#fff" fill-opacity="0.14"/><polygon points="1196.0,680.0 1216.0,685.0 1224.0,670.0 1204.0,665.0" fill="#000" fill-opacity="0.06"/><polygon points="1212.0,650.0 1232.0,655.0 1240.0,640.0 1220.0,635.0" fill="#000" fill-opacity="0.1"/><polygon points="1332.0,425.0 1352.0,430.0 1360.0,415.0 1340.0,410.0" fill="#000" fill-opacity="0.14"/><polygon points="1120.0,865.0 1140.0,870.0 1148.0,855.0 1128.0,850.0" fill="#000" fill-opacity="0.14"/><polygon points="1136.0,835.0 1156.0,840.0 1164.0,825.0 1144.0,820.0" fill="#000" fill-opacity="0.14"/><polygon points="1160.0,790.0 1180.0,795.0 1188.0,780.0 1168.0,775.0" fill="#000" fill-opacity="0.1"/><polygon points="1168.0,775.0 1188.0,780.0 1196.0,765.0 1176.0,760.0" fill="#000" fill-opacity="0.06"/><polygon points="1176.0,760.0 1196.0,765.0 1204.0,750.0 1184.0,745.0" fill="#000" fill-opacity="0.06"/><polygon points="1232.0,655.0 1252.0,660.0 1260.0,645.0 1240.0,640.0" fill="#000" fill-opacity="0.14"/><polygon points="1240.0,640.0 1260.0,645.0 1268.0,630.0 1248.0,625.0" fill="#000" fill-opacity="0.14"/><polygon points="1280.0,565.0 1300.0,570.0 1308.0,555.0 1288.0,550.0" fill="#fff" fill-opacity="0.06"/><polygon points="1288.0,550.0 1308.0,555.0 1316.0,540.0 1296.0,535.0" fill="#000" fill-opacity="0.1"/><polygon points="1312.0,505.0 1332.0,510.0 1340.0,495.0 1320.0,490.0" fill="#000" fill-opacity="0.14"/><polygon points="1320.0,490.0 1340.0,495.0 1348.0,480.0 1328.0,475.0" fill="#000" fill-opacity="0.14"/><polygon points="1352.0,430.0 1372.0,435.0 1380.0,420.0 1360.0,415.0" fill="#000" fill-opacity="0.14"/><polygon points="1360.0,415.0 1380.0,420.0 1388.0,405.0 1368.0,400.0" fill="#000" fill-opacity="0.14"/><polygon points="1132.0,885.0 1152.0,890.0 1160.0,875.0 1140.0,870.0" fill="#000" fill-opacity="0.06"/><polygon points="1148.0,855.0 1168.0,860.0 1176.0,845.0 1156.0,840.0" fill="#000" fill-opacity="0.06"/><polygon points="1172.0,810.0 1192.0,815.0 1200.0,800.0 1180.0,795.0" fill="#000" fill-opacity="0.14"/><polygon points="1204.0,750.0 1224.0,755.0 1232.0,740.0 1212.0,735.0" fill="#000" fill-opacity="0.06"/><polygon points="1252.0,660.0 1272.0,665.0 1280.0,650.0 1260.0,645.0" fill="#fff" fill-opacity="0.14"/><polygon points="1268.0,630.0 1288.0,635.0 1296.0,620.0 1276.0,615.0" fill="#000" fill-opacity="0.1"/><polygon points="1324.0,525.0 1344.0,530.0 1352.0,515.0 1332.0,510.0" fill="#fff" fill-opacity="0.14"/><polygon points="1332.0,510.0 1352.0,515.0 1360.0,500.0 1340.0,495.0" fill="#000" fill-opacity="0.1"/><polygon points="1340.0,495.0 1360.0,500.0 1368.0,485.0 1348.0,480.0" fill="#000" fill-opacity="0.1"/><polygon points="1356.0,465.0 1376.0,470.0 1384.0,455.0 1364.0,450.0" fill="#000" fill-opacity="0.06"/><polygon points="1380.0,420.0 1400.0,425.0 1408.0,410.0 1388.0,405.0" fill="#000" fill-opacity="0.14"/><polygon points="1388.0,405.0 1408.0,410.0 1416.0,395.0 1396.0,390.0" fill="#fff" fill-opacity="0.1"/><polygon points="1176.0,845.0 1196.0,850.0 1204.0,835.0 1184.0,830.0" fill="#000" fill-opacity="0.06"/><polygon points="1208.0,785.0 1228.0,790.0 1236.0,775.0 1216.0,770.0" fill="#fff" fill-opacity="0.1"/><polygon points="1216.0,770.0 1236.0,775.0 1244.0,760.0 1224.0,755.0" fill="#000" fill-opacity="0.1"/><polygon points="1224.0,755.0 1244.0,760.0 1252.0,745.0 1232.0,740.0" fill="#000" fill-opacity="0.14"/><polygon points="1232.0,740.0 1252.0,745.0 1260.0,730.0 1240.0,725.0" fill="#000" fill-opacity="0.1"/><polygon points="1240.0,725.0 1260.0,730.0 1268.0,715.0 1248.0,710.0" fill="#000" fill-opacity="0.1"/><polygon points="1248.0,710.0 1268.0,715.0 1276.0,700.0 1256.0,695.0" fill="#000" fill-opacity="0.06"/><polygon points="1264.0,680.0 1284.0,685.0 1292.0,670.0 1272.0,665.0" fill="#000" fill-opacity="0.06"/><polygon points="1272.0,665.0 1292.0,670.0 1300.0,655.0 1280.0,650.0" fill="#000" fill-opacity="0.06"/><polygon points="1280.0,650.0 1300.0,655.0 1308.0,640.0 1288.0,635.0" fill="#fff" fill-opacity="0.1"/><polygon points="1304.0,605.0 1324.0,610.0 1332.0,595.0 1312.0,590.0" fill="#fff" fill-opacity="0.14"/><polygon points="1328.0,560.0 1348.0,565.0 1356.0,550.0 1336.0,545.0" fill="#000" fill-opacity="0.06"/><polygon points="1336.0,545.0 1356.0,550.0 1364.0,535.0 1344.0,530.0" fill="#000" fill-opacity="0.06"/><polygon points="1344.0,530.0 1364.0,535.0 1372.0,520.0 1352.0,515.0" fill="#fff" fill-opacity="0.06"/><polygon points="1352.0,515.0 1372.0,520.0 1380.0,505.0 1360.0,500.0" fill="#000" fill-opacity="0.06"/><polygon points="1376.0,470.0 1396.0,475.0 1404.0,460.0 1384.0,455.0" fill="#000" fill-opacity="0.14"/><polygon points="1400.0,425.0 1420.0,430.0 1428.0,415.0 1408.0,410.0" fill="#000" fill-opacity="0.14"/><polygon points="1408.0,410.0 1428.0,415.0 1436.0,400.0 1416.0,395.0" fill="#000" fill-opacity="0.06"/><polygon points="1416.0,395.0 1436.0,400.0 1444.0,385.0 1424.0,380.0" fill="#000" fill-opacity="0.1"/><polygon points="1448.0,335.0 1468.0,340.0 1476.0,325.0 1456.0,320.0" fill="#000" fill-opacity="0.1"/><polygon points="1196.0,850.0 1216.0,855.0 1224.0,840.0 1204.0,835.0" fill="#fff" fill-opacity="0.1"/><polygon points="1212.0,820.0 1232.0,825.0 1240.0,810.0 1220.0,805.0" fill="#000" fill-opacity="0.06"/><polygon points="1228.0,790.0 1248.0,795.0 1256.0,780.0 1236.0,775.0" fill="#000" fill-opacity="0.1"/><polygon points="1236.0,775.0 1256.0,780.0 1264.0,765.0 1244.0,760.0" fill="#fff" fill-opacity="0.14"/><polygon points="1244.0,760.0 1264.0,765.0 1272.0,750.0 1252.0,745.0" fill="#000" fill-opacity="0.1"/><polygon points="1268.0,715.0 1288.0,720.0 1296.0,705.0 1276.0,700.0" fill="#fff" fill-opacity="0.06"/><polygon points="1276.0,700.0 1296.0,705.0 1304.0,690.0 1284.0,685.0" fill="#000" fill-opacity="0.14"/><polygon points="1284.0,685.0 1304.0,690.0 1312.0,675.0 1292.0,670.0" fill="#fff" fill-opacity="0.1"/><polygon points="1300.0,655.0 1320.0,660.0 1328.0,645.0 1308.0,640.0" fill="#000" fill-opacity="0.14"/><polygon points="1308.0,640.0 1328.0,645.0 1336.0,630.0 1316.0,625.0" fill="#000" fill-opacity="0.06"/><polygon points="1324.0,610.0 1344.0,615.0 1352.0,600.0 1332.0,595.0" fill="#000" fill-opacity="0.14"/><polygon points="1332.0,595.0 1352.0,600.0 1360.0,585.0 1340.0,580.0" fill="#000" fill-opacity="0.06"/><polygon points="1340.0,580.0 1360.0,585.0 1368.0,570.0 1348.0,565.0" fill="#000" fill-opacity="0.06"/><polygon points="1348.0,565.0 1368.0,570.0 1376.0,555.0 1356.0,550.0" fill="#000" fill-opacity="0.1"/><polygon points="1356.0,550.0 1376.0,555.0 1384.0,540.0 1364.0,535.0" fill="#000" fill-opacity="0.14"/><polygon points="1364.0,535.0 1384.0,540.0 1392.0,525.0 1372.0,520.0" fill="#000" fill-opacity="0.1"/><polygon points="1372.0,520.0 1392.0,525.0 1400.0,510.0 1380.0,505.0" fill="#000" fill-opacity="0.1"/><polygon points="1396.0,475.0 1416.0,480.0 1424.0,465.0 1404.0,460.0" fill="#000" fill-opacity="0.14"/><polygon points="1404.0,460.0 1424.0,465.0 1432.0,450.0 1412.0,445.0" fill="#000" fill-opacity="0.06"/><polygon points="1420.0,430.0 1440.0,435.0 1448.0,420.0 1428.0,415.0" fill="#000" fill-opacity="0.1"/><polygon points="1428.0,415.0 1448.0,420.0 1456.0,405.0 1436.0,400.0" fill="#fff" fill-opacity="0.14"/><polygon points="1444.0,385.0 1464.0,390.0 1472.0,375.0 1452.0,370.0" fill="#000" fill-opacity="0.14"/><polygon points="1484.0,310.0 1504.0,315.0 1512.0,300.0 1492.0,295.0" fill="#000" fill-opacity="0.14"/><polygon points="1224.0,840.0 1244.0,845.0 1252.0,830.0 1232.0,825.0" fill="#fff" fill-opacity="0.14"/><polygon points="1256.0,780.0 1276.0,785.0 1284.0,770.0 1264.0,765.0" fill="#000" fill-opacity="0.14"/><polygon points="1280.0,735.0 1300.0,740.0 1308.0,725.0 1288.0,720.0" fill="#000" fill-opacity="0.14"/><polygon points="1312.0,675.0 1332.0,680.0 1340.0,665.0 1320.0,660.0" fill="#000" fill-opacity="0.06"/><polygon points="1336.0,630.0 1356.0,635.0 1364.0,620.0 1344.0,615.0" fill="#000" fill-opacity="0.1"/><polygon points="1376.0,555.0 1396.0,560.0 1404.0,545.0 1384.0,540.0" fill="#000" fill-opacity="0.06"/><polygon points="1408.0,495.0 1428.0,500.0 1436.0,485.0 1416.0,480.0" fill="#000" fill-opacity="0.14"/><polygon points="1432.0,450.0 1452.0,455.0 1460.0,440.0 1440.0,435.0" fill="#000" fill-opacity="0.06"/><polygon points="1464.0,390.0 1484.0,395.0 1492.0,380.0 1472.0,375.0" fill="#000" fill-opacity="0.14"/><polygon points="1472.0,375.0 1492.0,380.0 1500.0,365.0 1480.0,360.0" fill="#000" fill-opacity="0.14"/><polygon points="1480.0,360.0 1500.0,365.0 1508.0,350.0 1488.0,345.0" fill="#000" fill-opacity="0.06"/><polygon points="1252.0,830.0 1272.0,835.0 1280.0,820.0 1260.0,815.0" fill="#000" fill-opacity="0.1"/><polygon points="1260.0,815.0 1280.0,820.0 1288.0,805.0 1268.0,800.0" fill="#000" fill-opacity="0.14"/><polygon points="1268.0,800.0 1288.0,805.0 1296.0,790.0 1276.0,785.0" fill="#000" fill-opacity="0.1"/><polygon points="1300.0,740.0 1320.0,745.0 1328.0,730.0 1308.0,725.0" fill="#000" fill-opacity="0.14"/><polygon points="1324.0,695.0 1344.0,700.0 1352.0,685.0 1332.0,680.0" fill="#000" fill-opacity="0.1"/><polygon points="1356.0,635.0 1376.0,640.0 1384.0,625.0 1364.0,620.0" fill="#000" fill-opacity="0.06"/><polygon points="1364.0,620.0 1384.0,625.0 1392.0,610.0 1372.0,605.0" fill="#000" fill-opacity="0.14"/><polygon points="1380.0,590.0 1400.0,595.0 1408.0,580.0 1388.0,575.0" fill="#000" fill-opacity="0.14"/><polygon points="1404.0,545.0 1424.0,550.0 1432.0,535.0 1412.0,530.0" fill="#000" fill-opacity="0.1"/><polygon points="1412.0,530.0 1432.0,535.0 1440.0,520.0 1420.0,515.0" fill="#000" fill-opacity="0.1"/><polygon points="1420.0,515.0 1440.0,520.0 1448.0,505.0 1428.0,500.0" fill="#000" fill-opacity="0.14"/><polygon points="1428.0,500.0 1448.0,505.0 1456.0,490.0 1436.0,485.0" fill="#000" fill-opacity="0.1"/><polygon points="1436.0,485.0 1456.0,490.0 1464.0,475.0 1444.0,470.0" fill="#000" fill-opacity="0.1"/><polygon points="1452.0,455.0 1472.0,460.0 1480.0,445.0 1460.0,440.0" fill="#000" fill-opacity="0.06"/><polygon points="1468.0,425.0 1488.0,430.0 1496.0,415.0 1476.0,410.0" fill="#000" fill-opacity="0.1"/><polygon points="1476.0,410.0 1496.0,415.0 1504.0,400.0 1484.0,395.0" fill="#000" fill-opacity="0.14"/><polygon points="1508.0,350.0 1528.0,355.0 1536.0,340.0 1516.0,335.0" fill="#fff" fill-opacity="0.06"/><polygon points="1516.0,335.0 1536.0,340.0 1544.0,325.0 1524.0,320.0" fill="#000" fill-opacity="0.06"/><polygon points="1272.0,835.0 1292.0,840.0 1300.0,825.0 1280.0,820.0" fill="#000" fill-opacity="0.14"/><polygon points="1296.0,790.0 1316.0,795.0 1324.0,780.0 1304.0,775.0" fill="#fff" fill-opacity="0.06"/><polygon points="1344.0,700.0 1364.0,705.0 1372.0,690.0 1352.0,685.0" fill="#000" fill-opacity="0.14"/><polygon points="1360.0,670.0 1380.0,675.0 1388.0,660.0 1368.0,655.0" fill="#000" fill-opacity="0.1"/><polygon points="1384.0,625.0 1404.0,630.0 1412.0,615.0 1392.0,610.0" fill="#000" fill-opacity="0.1"/><polygon points="1392.0,610.0 1412.0,615.0 1420.0,600.0 1400.0,595.0" fill="#000" fill-opacity="0.14"/><polygon points="1408.0,580.0 1428.0,585.0 1436.0,570.0 1416.0,565.0" fill="#000" fill-opacity="0.06"/><polygon points="1424.0,550.0 1444.0,555.0 1452.0,540.0 1432.0,535.0" fill="#000" fill-opacity="0.06"/><polygon points="1432.0,535.0 1452.0,540.0 1460.0,525.0 1440.0,520.0" fill="#fff" fill-opacity="0.14"/><polygon points="1448.0,505.0 1468.0,510.0 1476.0,495.0 1456.0,490.0" fill="#fff" fill-opacity="0.1"/><polygon points="1456.0,490.0 1476.0,495.0 1484.0,480.0 1464.0,475.0" fill="#000" fill-opacity="0.06"/><polygon points="1464.0,475.0 1484.0,480.0 1492.0,465.0 1472.0,460.0" fill="#000" fill-opacity="0.06"/><polygon points="1472.0,460.0 1492.0,465.0 1500.0,450.0 1480.0,445.0" fill="#000" fill-opacity="0.06"/><polygon points="1488.0,430.0 1508.0,435.0 1516.0,420.0 1496.0,415.0" fill="#000" fill-opacity="0.06"/><polygon points="1496.0,415.0 1516.0,420.0 1524.0,405.0 1504.0,400.0" fill="#000" fill-opacity="0.1"/><polygon points="1504.0,400.0 1524.0,405.0 1532.0,390.0 1512.0,385.0" fill="#000" fill-opacity="0.1"/><polygon points="1512.0,385.0 1532.0,390.0 1540.0,375.0 1520.0,370.0" fill="#000" fill-opacity="0.1"/><polygon points="1520.0,370.0 1540.0,375.0 1548.0,360.0 1528.0,355.0" fill="#000" fill-opacity="0.14"/><polygon points="1324.0,780.0 1344.0,785.0 1352.0,770.0 1332.0,765.0" fill="#fff" fill-opacity="0.1"/><polygon points="1332.0,765.0 1352.0,770.0 1360.0,755.0 1340.0,750.0" fill="#000" fill-opacity="0.14"/><polygon points="1364.0,705.0 1384.0,710.0 1392.0,695.0 1372.0,690.0" fill="#000" fill-opacity="0.06"/><polygon points="1404.0,630.0 1424.0,635.0 1432.0,620.0 1412.0,615.0" fill="#fff" fill-opacity="0.14"/><polygon points="1420.0,600.0 1440.0,605.0 1448.0,590.0 1428.0,585.0" fill="#000" fill-opacity="0.06"/><polygon points="1428.0,585.0 1448.0,590.0 1456.0,575.0 1436.0,570.0" fill="#000" fill-opacity="0.14"/><polygon points="1468.0,510.0 1488.0,515.0 1496.0,500.0 1476.0,495.0" fill="#000" fill-opacity="0.06"/><polygon points="1476.0,495.0 1496.0,500.0 1504.0,485.0 1484.0,480.0" fill="#fff" fill-opacity="0.14"/><polygon points="1492.0,465.0 1512.0,470.0 1520.0,455.0 1500.0,450.0" fill="#000" fill-opacity="0.06"/><polygon points="1508.0,435.0 1528.0,440.0 1536.0,425.0 1516.0,420.0" fill="#000" fill-opacity="0.06"/><polygon points="1516.0,420.0 1536.0,425.0 1544.0,410.0 1524.0,405.0" fill="#000" fill-opacity="0.14"/><polygon points="1524.0,405.0 1544.0,410.0 1552.0,395.0 1532.0,390.0" fill="#000" fill-opacity="0.14"/><polygon points="1328.0,815.0 1348.0,820.0 1356.0,805.0 1336.0,800.0" fill="#000" fill-opacity="0.1"/><polygon points="1352.0,770.0 1372.0,775.0 1380.0,760.0 1360.0,755.0" fill="#000" fill-opacity="0.06"/><polygon points="1360.0,755.0 1380.0,760.0 1388.0,745.0 1368.0,740.0" fill="#000" fill-opacity="0.14"/><polygon points="1368.0,740.0 1388.0,745.0 1396.0,730.0 1376.0,725.0" fill="#fff" fill-opacity="0.1"/><polygon points="1384.0,710.0 1404.0,715.0 1412.0,700.0 1392.0,695.0" fill="#000" fill-opacity="0.06"/><polygon points="1400.0,680.0 1420.0,685.0 1428.0,670.0 1408.0,665.0" fill="#000" fill-opacity="0.06"/><polygon points="1416.0,650.0 1436.0,655.0 1444.0,640.0 1424.0,635.0" fill="#000" fill-opacity="0.1"/><polygon points="1448.0,590.0 1468.0,595.0 1476.0,580.0 1456.0,575.0" fill="#000" fill-opacity="0.06"/><polygon points="1464.0,560.0 1484.0,565.0 1492.0,550.0 1472.0,545.0" fill="#000" fill-opacity="0.06"/><polygon points="1504.0,485.0 1524.0,490.0 1532.0,475.0 1512.0,470.0" fill="#000" fill-opacity="0.14"/><polygon points="1512.0,470.0 1532.0,475.0 1540.0,460.0 1520.0,455.0" fill="#000" fill-opacity="0.06"/><polygon points="1528.0,440.0 1548.0,445.0 1556.0,430.0 1536.0,425.0" fill="#000" fill-opacity="0.14"/><polygon points="1536.0,425.0 1556.0,430.0 1564.0,415.0 1544.0,410.0" fill="#000" fill-opacity="0.06"/><polygon points="1552.0,395.0 1572.0,400.0 1580.0,385.0 1560.0,380.0" fill="#000" fill-opacity="0.14"/><polygon points="1356.0,805.0 1376.0,810.0 1384.0,795.0 1364.0,790.0" fill="#fff" fill-opacity="0.14"/><polygon points="1388.0,745.0 1408.0,750.0 1416.0,735.0 1396.0,730.0" fill="#000" fill-opacity="0.06"/><polygon points="1412.0,700.0 1432.0,705.0 1440.0,690.0 1420.0,685.0" fill="#000" fill-opacity="0.14"/><polygon points="1420.0,685.0 1440.0,690.0 1448.0,675.0 1428.0,670.0" fill="#000" fill-opacity="0.1"/><polygon points="1428.0,670.0 1448.0,675.0 1456.0,660.0 1436.0,655.0" fill="#000" fill-opacity="0.06"/><polygon points="1436.0,655.0 1456.0,660.0 1464.0,645.0 1444.0,640.0" fill="#000" fill-opacity="0.06"/><polygon points="1452.0,625.0 1472.0,630.0 1480.0,615.0 1460.0,610.0" fill="#fff" fill-opacity="0.1"/><polygon points="1460.0,610.0 1480.0,615.0 1488.0,600.0 1468.0,595.0" fill="#000" fill-opacity="0.06"/><polygon points="1468.0,595.0 1488.0,600.0 1496.0,585.0 1476.0,580.0" fill="#fff" fill-opacity="0.14"/><polygon points="1524.0,490.0 1544.0,495.0 1552.0,480.0 1532.0,475.0" fill="#000" fill-opacity="0.1"/><polygon points="1556.0,430.0 1576.0,435.0 1584.0,420.0 1564.0,415.0" fill="#000" fill-opacity="0.14"/><polygon points="1564.0,415.0 1584.0,420.0 1592.0,405.0 1572.0,400.0" fill="#000" fill-opacity="0.06"/><polygon points="1400.0,765.0 1420.0,770.0 1428.0,755.0 1408.0,750.0" fill="#000" fill-opacity="0.06"/><polygon points="1416.0,735.0 1436.0,740.0 1444.0,725.0 1424.0,720.0" fill="#000" fill-opacity="0.1"/><polygon points="1432.0,705.0 1452.0,710.0 1460.0,695.0 1440.0,690.0" fill="#000" fill-opacity="0.14"/><polygon points="1440.0,690.0 1460.0,695.0 1468.0,680.0 1448.0,675.0" fill="#000" fill-opacity="0.1"/><polygon points="1428.0,755.0 1448.0,760.0 1456.0,745.0 1436.0,740.0" fill="#000" fill-opacity="0.06"/></g></svg>
<div class="t" style="left:1795px;top:963px;color:#fff;font-family:'Liberation Serif',serif;font-size:14.5px;line-height:16px">Isatis.neo Mining ®</div>
<svg style="left:1549px;top:776px" width="16" height="23" viewBox="0 0 16 23"><g fill="#fff"><rect x="4" y="0" width="2.2" height="14" rx="1.1"/><rect x="7.2" y="5" width="2" height="9" rx="1"/><rect x="10.1" y="5.4" width="2" height="9" rx="1"/><rect x="13" y="6.4" width="2.2" height="9" rx="1"/><path d="M4 10.5H15.2V16.5Q15.2 22.3 10 22.3Q6.5 22.3 4.5 19.5L0.3 13.6Q0 12.3 1.3 12.4L4 14.8Z"/></g></svg>
</body></html>
